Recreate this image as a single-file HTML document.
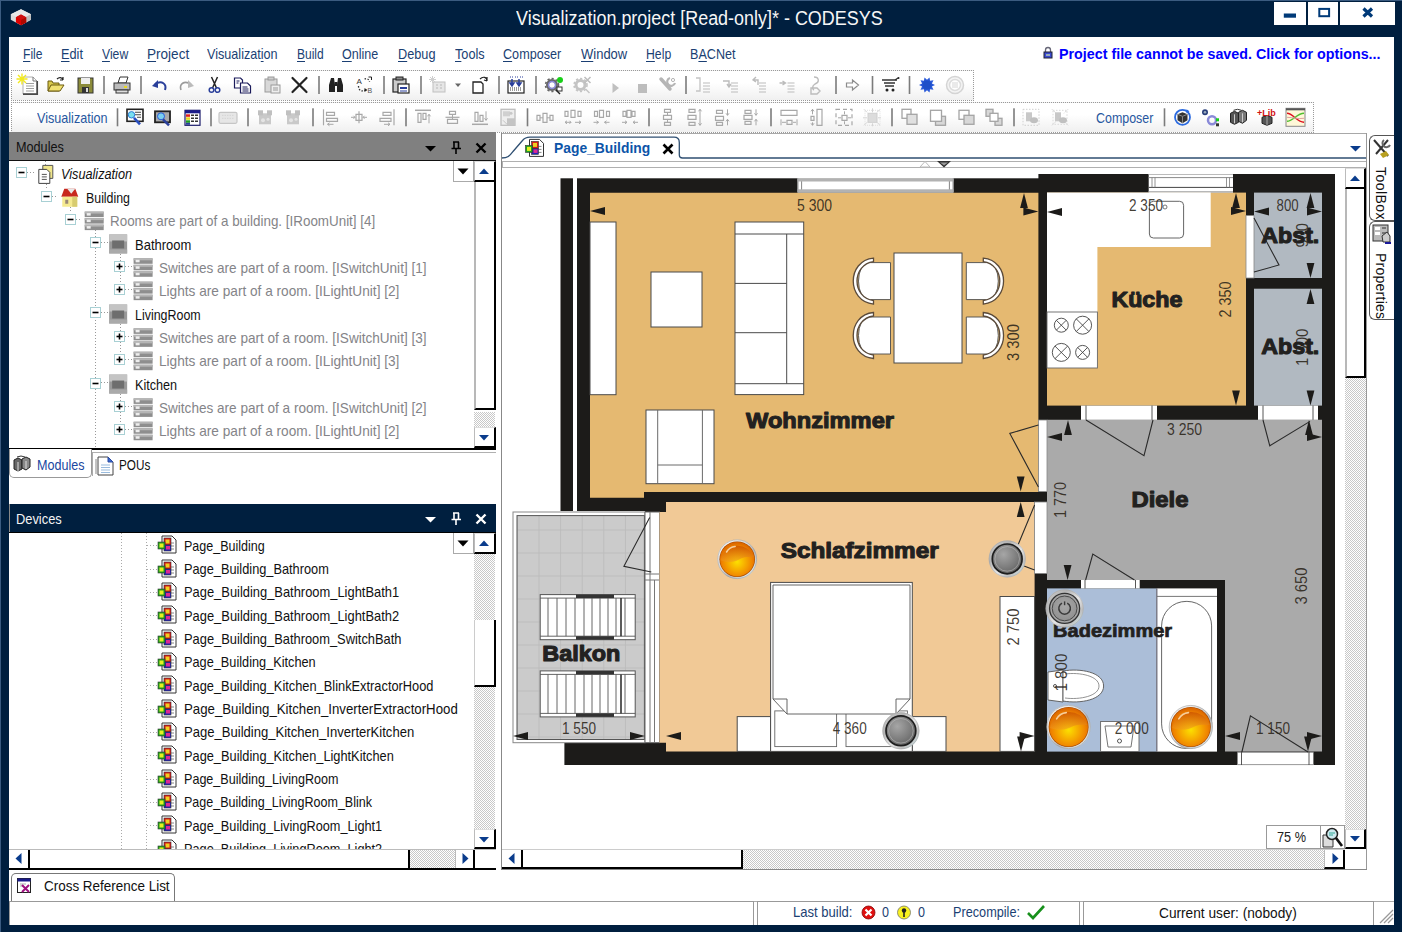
<!DOCTYPE html>
<html><head><meta charset="utf-8">
<style>
*{box-sizing:border-box;margin:0;padding:0}
html,body{width:1402px;height:932px;overflow:hidden;background:#001f3f;font-family:"Liberation Sans",sans-serif;font-size:13px;color:#000}
.abs{position:absolute}
#win{position:absolute;left:0;top:0;width:1402px;height:932px;background:#001f3f}
#client{position:absolute;left:9px;top:37px;width:1385px;height:888px;background:#fff}
#title{position:absolute;left:0;top:0;width:1402px;height:37px;color:#fff;font-size:18.5px;text-align:center;line-height:36px;letter-spacing:0px}
.wbtn{position:absolute;top:2px;height:23px;background:#fff}
.menu{position:absolute;top:46px;font-size:14px;color:#1b3f73;letter-spacing:-0.55px;white-space:nowrap}
.menu u{text-decoration:underline;text-underline-offset:2px}
.tb{position:absolute;border:1px dotted #9a9a9a;background:linear-gradient(#fff 40%,#f0f0f0)}
.sep{position:absolute;width:2px;background:#666}
.phdr{position:absolute;height:26px;color:#fff;font-size:13px;line-height:25px;padding-left:6px;letter-spacing:-0.2px}
.tree{position:absolute;font-size:14px;white-space:nowrap;letter-spacing:-0.35px}
.g{color:#7a7a7a}
.sbv{position:absolute;width:19px;background:#fff}
.hatch{background-image:conic-gradient(#fff 25%,#c8c8c8 0 50%,#fff 0 75%,#c8c8c8 0);background-size:2px 2px}
.sbtn{position:absolute;width:19px;height:19px;background:#fff;border:1px solid #555;border-right:2px solid #222;border-bottom:2px solid #222}
</style></head><body>
<div id="win">
<div class="abs" style="left:0;top:0;width:1402px;height:1px;background:#3b5b80"></div><div class="abs" style="left:0;top:0;width:1px;height:932px;background:#3b5b80"></div>
<div class="abs" style="left:515.7px;top:6.3px;font-size:20px;line-height:24px;color:#f6f6f6;white-space:nowrap;transform:scaleX(0.8970);transform-origin:0 50%;">Visualization.project [Read-only]* - CODESYS</div>
<div class="wbtn" style="left:1274px;width:32px"></div>
<div class="wbtn" style="left:1308px;width:30px"></div>
<div class="wbtn" style="left:1340px;width:55px"></div>
<svg class="abs" style="left:1270px;top:0" width="130" height="30"><rect x="13.8" y="13.5" width="12.2" height="4.2" fill="#003a78"/><rect x="49.3" y="8.9" width="9.8" height="7.3" fill="none" stroke="#003a78" stroke-width="2"/><path d="M93.5,8.5L102,16.5M102,8.5L93.5,16.5" stroke="#003a78" stroke-width="3.2"/></svg>
<svg class="abs" style="left:8px;top:6px" width="28" height="24" viewBox="8 6 28 24"><path d="M21,9.2L31,14.3V19.8L21,25.3L10.8,19.8V14.3Z" fill="#dcdcdc"/><path d="M21,9.2L31,14.3L21,19.5L10.8,14.3Z" fill="#e8e8e8"/><path d="M31,14.3V19.8L21,25.3V19.5Z" fill="#bdbdbd"/><path d="M21,14.6L26.2,17.3V22.5L21,25.3L15.9,22.5V17.3Z" fill="#e00000"/><path d="M21,19.8L26.2,17.3V22.5L21,25.3Z" fill="#b00800"/><path d="M21,14.6L26.2,17.3L21,19.8L15.9,17.3Z" fill="#d01010"/></svg>
<div id="client"></div>
<div class="abs" style="left:23.0px;top:45.2px;font-size:15px;line-height:18px;color:#1b3f73;white-space:nowrap;transform:scaleX(0.8067);transform-origin:0 50%;"><u style="text-underline-offset:2px">F</u>ile</div>
<div class="abs" style="left:61.2px;top:45.2px;font-size:15px;line-height:18px;color:#1b3f73;white-space:nowrap;transform:scaleX(0.8508);transform-origin:0 50%;"><u style="text-underline-offset:2px">E</u>dit</div>
<div class="abs" style="left:101.8px;top:45.2px;font-size:15px;line-height:18px;color:#1b3f73;white-space:nowrap;transform:scaleX(0.8124);transform-origin:0 50%;"><u style="text-underline-offset:2px">V</u>iew</div>
<div class="abs" style="left:146.8px;top:45.2px;font-size:15px;line-height:18px;color:#1b3f73;white-space:nowrap;transform:scaleX(0.9039);transform-origin:0 50%;"><u style="text-underline-offset:2px">P</u>roject</div>
<div class="abs" style="left:207.2px;top:45.2px;font-size:15px;line-height:18px;color:#1b3f73;white-space:nowrap;transform:scaleX(0.8409);transform-origin:0 50%;">Visualizat<u style="text-underline-offset:2px">i</u>on</div>
<div class="abs" style="left:296.6px;top:45.2px;font-size:15px;line-height:18px;color:#1b3f73;white-space:nowrap;transform:scaleX(0.8004);transform-origin:0 50%;"><u style="text-underline-offset:2px">B</u>uild</div>
<div class="abs" style="left:342.0px;top:45.2px;font-size:15px;line-height:18px;color:#1b3f73;white-space:nowrap;transform:scaleX(0.8349);transform-origin:0 50%;"><u style="text-underline-offset:2px">O</u>nline</div>
<div class="abs" style="left:397.5px;top:45.2px;font-size:15px;line-height:18px;color:#1b3f73;white-space:nowrap;transform:scaleX(0.8484);transform-origin:0 50%;"><u style="text-underline-offset:2px">D</u>ebug</div>
<div class="abs" style="left:454.5px;top:45.2px;font-size:15px;line-height:18px;color:#1b3f73;white-space:nowrap;transform:scaleX(0.8478);transform-origin:0 50%;"><u style="text-underline-offset:2px">T</u>ools</div>
<div class="abs" style="left:503.0px;top:45.2px;font-size:15px;line-height:18px;color:#1b3f73;white-space:nowrap;transform:scaleX(0.8410);transform-origin:0 50%;"><u style="text-underline-offset:2px">C</u>omposer</div>
<div class="abs" style="left:580.5px;top:45.2px;font-size:15px;line-height:18px;color:#1b3f73;white-space:nowrap;transform:scaleX(0.8658);transform-origin:0 50%;"><u style="text-underline-offset:2px">W</u>indow</div>
<div class="abs" style="left:645.5px;top:45.2px;font-size:15px;line-height:18px;color:#1b3f73;white-space:nowrap;transform:scaleX(0.8166);transform-origin:0 50%;"><u style="text-underline-offset:2px">H</u>elp</div>
<div class="abs" style="left:689.5px;top:45.2px;font-size:15px;line-height:18px;color:#1b3f73;white-space:nowrap;transform:scaleX(0.8397);transform-origin:0 50%;">B<u style="text-underline-offset:2px">A</u>CNet</div>
<div class="abs" style="left:1059.0px;top:45.2px;font-size:15px;line-height:18px;color:#0000ff;font-weight:700;white-space:nowrap;transform:scaleX(0.9524);transform-origin:0 50%;">Project file cannot be saved. Click for options...</div>
<svg class="abs" style="left:1042px;top:46px" width="12" height="14"><path d="M3.5,6V4A2.5,2.5 0 0 1 8.5,4V6" fill="none" stroke="#667" stroke-width="1.3"/><rect x="2" y="6" width="8" height="6" fill="#3a4ad0" stroke="#223"/><rect x="4" y="8" width="4" height="2" fill="#9ab"/></svg>
<div class="tb" style="left:11px;top:70px;width:963px;height:31px"></div>
<div class="tb" style="left:11px;top:102px;width:1303px;height:31px"></div>
<div class="abs" style="left:37.0px;top:109.0px;font-size:15px;line-height:18px;color:#2757a0;white-space:nowrap;transform:scaleX(0.8398);transform-origin:0 50%;">Visualization</div>
<div class="abs" style="left:1095.7px;top:109.0px;font-size:15px;line-height:18px;color:#2757a0;white-space:nowrap;transform:scaleX(0.8280);transform-origin:0 50%;">Composer</div>
<svg class="abs" style="left:0;top:0" width="1402" height="134" viewBox="0 0 1402 134">
<g transform="translate(29,85)"><path d="M-6,-8H4L8,-4V9H-6Z" fill="#fff" stroke="#b0b0b0"/><path d="M8.2,-4V9.2H-6" fill="none" stroke="#4a4a4a" stroke-width="1.7"/><path d="M4,-8V-4H8" fill="none" stroke="#777"/><path d="M-3,-1.5H5M-3,1H5M-3,3.5H5M-3,6H5" stroke="#a0a0a0" stroke-width="1.1"/><path d="M-11,-10L-3,-2M-3,-10L-11,-2M-7,-11.5V-0.5M-12.5,-6H-1.5" stroke="#f2ea20" stroke-width="1.4"/></g>
<g transform="translate(56,85)"><path d="M-8,6V-4H-4L-3,-2H3V6Z" fill="#d8c84a" stroke="#6a5a10" stroke-width="1"/><path d="M-8,6L-5,0H8L4,6Z" fill="#f0e070" stroke="#6a5a10" stroke-width="1"/><path d="M1,-6C3,-8 6,-8 7,-5M7,-5L7,-8M7,-5L4,-5" stroke="#222" fill="none" stroke-width="1.2"/></g>
<g transform="translate(85,85)"><rect x="-7" y="-7" width="15" height="15" fill="#8b8b3a" stroke="#333" stroke-width="1"/><rect x="-4" y="-7" width="9" height="6" fill="#eee"/><rect x="-3" y="2" width="7" height="6" fill="#333"/><rect x="1" y="3" width="2" height="4" fill="#ddd"/></g>
<rect x="103.2" y="76" width="1.6" height="18" fill="#7c7c7c"/>
<g transform="translate(122,85)"><path d="M-4,-2L-2,-8H6L4,-2Z" fill="#fff" stroke="#333"/><rect x="-8" y="-2" width="16" height="7" fill="#bbb" stroke="#333"/><rect x="-6" y="5" width="12" height="3" fill="#ddd" stroke="#333"/><rect x="2" y="1" width="3" height="2" fill="#e8d820"/></g>
<rect x="140.2" y="76" width="1.6" height="18" fill="#7c7c7c"/>
<g transform="translate(159,85)"><path d="M6,5C8,-1 3,-5 -4,-1" fill="none" stroke="#2a3f9a" stroke-width="2"/><path d="M-7,1L-1,-5L-1,3Z" fill="#2a3f9a"/></g>
<g transform="translate(187,85)"><path d="M-6,5C-8,-1 -3,-5 4,-1" fill="none" stroke="#9a9a9a" stroke-width="1.6"/><path d="M7,1L1,-5L1,3Z" fill="#bbb"/></g>
<g transform="translate(214.5,85)"><path d="M-3,-8L2,3M3,-8L-2,3" stroke="#222" stroke-width="1.5" fill="none"/><circle cx="-3" cy="5" r="2.3" fill="none" stroke="#2a3f9a" stroke-width="1.5"/><circle cx="3" cy="5" r="2.3" fill="none" stroke="#2a3f9a" stroke-width="1.5"/></g>
<g transform="translate(242.5,85)"><path d="M-8,-7H-2L0,-5V3H-8Z" fill="#fff" stroke="#1a1a5a" stroke-width="1.2"/><path d="M-2,-2H5L8,1V8H-2Z" fill="#fff" stroke="#1a1a5a" stroke-width="1.2"/><path d="M0,2H5M0,4H6M0,6H6M-6,-4H-3M-6,-2H-4" stroke="#1a1a5a" stroke-width="1"/></g>
<g transform="translate(272,85)"><rect x="-7" y="-6" width="12" height="13" fill="#d8d8d8" stroke="#9a9a9a"/><rect x="-4" y="-8" width="6" height="3" fill="#ccc" stroke="#9a9a9a"/><rect x="-1" y="0" width="9" height="8" fill="#eee" stroke="#9a9a9a"/><path d="M1,3H6M1,5H6" stroke="#9a9a9a"/></g>
<g transform="translate(299.5,85)"><path d="M-7,-7L7,7M7,-7L-7,7" stroke="#222" stroke-width="2.2" stroke-linecap="round"/></g>
<rect x="318.2" y="76" width="1.6" height="18" fill="#7c7c7c"/>
<g transform="translate(336,85)"><path d="M-7,7V0L-5,-7H-2L-1,0V7ZM7,7V0L5,-7H2L1,0V7Z" fill="#222"/><rect x="-1.5" y="-3" width="3" height="4" fill="#222"/></g>
<g transform="translate(364.5,85)"><text x="-8" y="-1" font-size="8" font-family="Liberation Sans" fill="#333">A</text><text x="3" y="8" font-size="7" font-family="Liberation Sans" fill="#555">B</text><path d="M-6,1C-6,6 -2,7 1,5" fill="none" stroke="#333" stroke-dasharray="1.5,1.5" stroke-width="1.3"/><path d="M0,-6C3,-7 5,-5 5,-3" fill="none" stroke="#333" stroke-dasharray="1.5,1.5" stroke-width="1.3"/><path d="M0,3L3,5L0,7Z" fill="#222"/><path d="M4,-8L7,-8L7,-5" fill="none" stroke="#222"/></g>
<rect x="383.2" y="76" width="1.6" height="18" fill="#7c7c7c"/>
<g transform="translate(401,85)"><rect x="-8" y="-6" width="13" height="13" fill="#ccc" stroke="#222" stroke-width="1.2"/><rect x="-5" y="-8" width="7" height="3" fill="#888" stroke="#222"/><rect x="-3" y="-1" width="11" height="9" fill="#fff" stroke="#222" stroke-width="1.2"/><rect x="-1" y="2" width="7" height="2" fill="#2a3f9a"/><path d="M-1,6H6" stroke="#2a3f9a"/></g>
<rect x="420.2" y="76" width="1.6" height="18" fill="#7c7c7c"/>
<g transform="translate(438,85)"><rect x="-5" y="-3" width="12" height="10" fill="#e6e6e6" stroke="#c0c0c0"/><path d="M-2,0H0M2,0H4M-2,3H0M2,3H4" stroke="#c8c8c8" stroke-width="1.5"/><path d="M-8,-8L-3,-3M-3,-8L-8,-3M-5.5,-9V-2M-9,-5.5H-2" stroke="#cfcfcf" stroke-width="1"/></g>
<g transform="translate(458,85)"><path d="M-3,-1.5H3L0,2Z" fill="#666"/></g>
<g transform="translate(480,85)"><path d="M-7,-3H1L3,-1V8H-7Z" fill="#fff" stroke="#222" stroke-width="1.3"/><path d="M0,-6C3,-9 7,-8 7,-4M7,-4L7,-8M7,-4L4,-5" stroke="#222" fill="none" stroke-width="1.2"/></g>
<rect x="498.2" y="76" width="1.6" height="18" fill="#7c7c7c"/>
<g transform="translate(516,85)"><rect x="-8" y="-4" width="16" height="12" fill="#fff" stroke="#222" stroke-width="1.2"/><path d="M-6,5H6M-6,3H6" stroke="#333" stroke-dasharray="1,1"/><path d="M-6,-8H-2M-1,-8H3M4,-8H8" stroke="#2a3f9a" stroke-dasharray="1,1"/><path d="M-4,-6V-1M-6,-2L-4,1L-2,-2ZM3,-6V-1M1,-2L3,1L5,-2Z" stroke="#2a3f9a" fill="#2a3f9a" stroke-width="1.5"/></g>
<rect x="535.2" y="76" width="1.6" height="18" fill="#7c7c7c"/>
<g transform="translate(554,85)"><circle cx="-2" cy="0" r="4.5" fill="none" stroke="#666" stroke-width="3"/><circle cx="-2" cy="0" r="6.5" fill="none" stroke="#666" stroke-width="1.6" stroke-dasharray="2.2,2"/><circle cx="-2" cy="0" r="3.5" fill="none" stroke="#8a8ad8" stroke-width="1.5"/><circle cx="6" cy="-5" r="3" fill="#18d018"/><rect x="3" y="2" width="5" height="4" fill="#fff" stroke="#333"/><path d="M2,5L6,9" stroke="#222" stroke-width="1.5"/></g>
<g transform="translate(582.5,85)"><circle cx="-2" cy="0" r="4.5" fill="none" stroke="#c4c4c4" stroke-width="3"/><circle cx="-2" cy="0" r="6.5" fill="none" stroke="#c4c4c4" stroke-width="1.6" stroke-dasharray="2.2,2"/><path d="M2,-8L8,-2M8,-8L2,-2" stroke="#bdbdbd" stroke-width="1.5"/><path d="M3,4L7,8" stroke="#c4c4c4" stroke-width="1.5"/></g>
<g transform="translate(615.5,85)"><path d="M-3,-2L3.5,3L-3,8Z" fill="#c0c0c0"/></g>
<g transform="translate(642.5,85)"><rect x="-4.5" y="-1" width="9" height="9" fill="#bdbdbd"/></g>
<g transform="translate(668,85)"><path d="M-7,-6L2,4" stroke="#b5b5b5" stroke-width="3.5" stroke-linecap="round"/><path d="M2,-7A4,4 0 1 0 7,-2" fill="none" stroke="#b5b5b5" stroke-width="2.2"/><circle cx="5" cy="-5" r="1.6" fill="#fff" stroke="#b5b5b5"/></g>
<rect x="685.2" y="76" width="1.6" height="18" fill="#7c7c7c"/>
<g transform="translate(703,85)"><path d="M-7,-7H-3V6H-7" fill="none" stroke="#c4c4c4" stroke-width="1.3"/><path d="M0,-2H7M0,1H7M0,4H7M0,7H7" stroke="#bcbcbc" stroke-width="1.2"/></g>
<g transform="translate(731,85)"><path d="M-8,-4H-2V1M-4,-1L-2,2L0,-1" fill="none" stroke="#bcbcbc" stroke-width="1.4"/><path d="M0,-2H7M0,1H7M0,4H7M0,7H7" stroke="#bcbcbc" stroke-width="1.2"/></g>
<g transform="translate(759,85)"><path d="M-3,-8L-6,-5L-3,-3M-6,-5H-1V0" fill="none" stroke="#bcbcbc" stroke-width="1.4"/><path d="M0,-2H7M0,1H7M0,4H7M0,7H7" stroke="#bcbcbc" stroke-width="1.2"/></g>
<g transform="translate(787.5,85)"><path d="M-8,-2H-3M-5,-4L-2,-2L-5,0" fill="none" stroke="#bcbcbc" stroke-width="1.4"/><path d="M0,-2H7M0,1H7M0,4H7M0,7H7" stroke="#bcbcbc" stroke-width="1.2"/></g>
<g transform="translate(815,85)"><path d="M-1,-8C4,-8 5,-3 0,-1C-3,1 -3,4 -1,5M-4,3H2L5,6L2,9H-4Z" fill="none" stroke="#bcbcbc" stroke-width="1.4"/></g>
<rect x="835.2" y="76" width="1.6" height="18" fill="#7c7c7c"/>
<g transform="translate(852.5,85)"><path d="M-6,-2H0V-5L6,0L0,5V2H-6Z" fill="#fff" stroke="#8c8c8c" stroke-width="1.2"/></g>
<rect x="871.7" y="76" width="1.6" height="18" fill="#7c7c7c"/>
<g transform="translate(890,85)"><path d="M-8,-5H7M-6,-2H5M-5,1H4" stroke="#333" stroke-width="1.6"/><path d="M5,-5L8,-7" stroke="#333" stroke-width="1.4"/><circle cx="-3" cy="5" r="1.5" fill="#222"/><circle cx="3" cy="5" r="1.5" fill="#222"/><circle cx="8.5" cy="-7" r="1" fill="#222"/></g>
<rect x="908.7" y="76" width="1.6" height="18" fill="#7c7c7c"/>
<g transform="translate(927,85)"><polygon points="8.0,0.0 4.9,1.6 6.5,4.7 3.1,4.2 2.5,7.6 0.0,5.2 -2.5,7.6 -3.1,4.2 -6.5,4.7 -4.9,1.6 -8.0,0.0 -4.9,-1.6 -6.5,-4.7 -3.1,-4.2 -2.5,-7.6 -0.0,-5.2 2.5,-7.6 3.1,-4.2 6.5,-4.7 4.9,-1.6" fill="#2a5ad8"/><circle r="4.5" fill="#1e4fc8"/></g>
<g transform="translate(955,85)"><circle r="8.5" fill="#f4f4f4" stroke="#d4d4d4" stroke-width="1.5"/><circle r="5.5" fill="#fff" stroke="#dcdcdc" stroke-width="1.5"/><rect x="-3" y="-3" width="6" height="6" fill="#eaeaea"/></g>
<rect x="116.7" y="108.3" width="1.6" height="18" fill="#7c7c7c"/>
<g transform="translate(135,117.3)"><rect x="-8" y="-8" width="16" height="12" fill="#fff" stroke="#222" stroke-width="1.6"/><path d="M0,-5H6M0,-2.5H6M2,0H6" stroke="#444" stroke-width="1.1"/><circle cx="-3.5" cy="-2.5" r="3.2" fill="#7ae0f0" stroke="#2a7ad8"/><path d="M-1,0.5L5,7" stroke="#2a4fc0" stroke-width="2.6"/></g>
<g transform="translate(163,117.3)"><rect x="-8" y="-6" width="15" height="11" fill="#aaa" stroke="#222" stroke-width="1.8"/><circle cx="-2" cy="-1" r="3.5" fill="#7ad0f0" stroke="#2a5ad8"/><path d="M0,2L6,8" stroke="#2a3f9a" stroke-width="2.5"/></g>
<g transform="translate(192,117.3)"><rect x="-7" y="-7" width="15" height="15" fill="#fff" stroke="#1a1a6a" stroke-width="1.2"/><rect x="-7" y="-7" width="15" height="3" fill="#1a1a8a"/><rect x="-6" y="-3" width="4" height="2.5" fill="#e02020"/><rect x="-6" y="0" width="4" height="2.5" fill="#e8d820"/><rect x="-6" y="3" width="4" height="2.5" fill="#20a020"/><rect x="-6" y="5.5" width="4" height="2" fill="#2a3f9a"/><path d="M-1,-2H2M3,-2H6M-1,1H2M3,1H6M-1,4H2M3,4H6" stroke="#333" stroke-width="1.6"/></g>
<rect x="210.2" y="108.3" width="1.6" height="18" fill="#7c7c7c"/>
<g transform="translate(228,117.3)"><rect x="-9" y="-5" width="18" height="11" rx="1.5" fill="#e6e6e6" stroke="#c6c6c6" stroke-width="1.2"/><path d="M-6,-2H6M-6,1H6" stroke="#d4d4d4" stroke-dasharray="1.5,1"/></g>
<rect x="247.2" y="108.3" width="1.6" height="18" fill="#7c7c7c"/>
<g transform="translate(265,117.3)"><rect x="-6" y="-4" width="12" height="11" fill="#c9c9c9"/><rect x="-7" y="-7" width="5" height="5" fill="#c0c0c0"/><rect x="2" y="-7" width="5" height="5" fill="#c0c0c0"/><circle cx="-2" cy="3" r="2" fill="#e4e4e4"/><circle cx="3" cy="2" r="1.5" fill="#e4e4e4"/></g>
<g transform="translate(293,117.3)"><rect x="-6" y="-4" width="12" height="11" fill="#c9c9c9"/><rect x="-7" y="-7" width="5" height="5" fill="#c0c0c0"/><rect x="2" y="-7" width="5" height="5" fill="#c0c0c0"/><circle cx="-2" cy="3" r="2" fill="#e4e4e4"/><circle cx="3" cy="2" r="1.5" fill="#e4e4e4"/></g>
<rect x="312.2" y="108.3" width="1.6" height="18" fill="#7c7c7c"/>
<g transform="translate(330.5,117.3)"><path d="M-7,-8V8" fill="none" stroke="#a8a8a8" stroke-width="1.2"/><path d="M-4,-5H4V-2H-4ZM-4,1H7V4H-4Z" fill="none" stroke="#a8a8a8" stroke-width="1.2"/><path d="M-3,7H3M-3,7L-1,5.5M-3,7L-1,8.5" fill="none" stroke="#a8a8a8" stroke-width="1"/></g>
<g transform="translate(359,117.3)"><path d="M0,-6V6" fill="none" stroke="#a8a8a8" stroke-width="1.2"/><path d="M-3,-3H3V3H-3Z" fill="none" stroke="#a8a8a8" stroke-width="1.2"/><path d="M-8,0H-4M4,0H8M-5.5,-1.5L-4,0L-5.5,1.5M5.5,-1.5L4,0L5.5,1.5" fill="none" stroke="#a8a8a8" stroke-width="1"/></g>
<g transform="translate(387,117.3)"><path d="M7,-8V8" fill="none" stroke="#a8a8a8" stroke-width="1.2"/><path d="M4,-5H-4V-2H4ZM4,1H-7V4H4Z" fill="none" stroke="#a8a8a8" stroke-width="1.2"/><path d="M-3,7H3M3,7L1,5.5M3,7L1,8.5" fill="none" stroke="#a8a8a8" stroke-width="1"/></g>
<rect x="405.2" y="108.3" width="1.6" height="18" fill="#7c7c7c"/>
<g transform="translate(423,117.3)"><path d="M-8,-7H8" fill="none" stroke="#a8a8a8" stroke-width="1.5"/><path d="M-5,-4H-2V5H-5ZM0,-4H3V2H0Z" fill="none" stroke="#a8a8a8" stroke-width="1.2"/><path d="M6,6V-3M6,-3L4.5,-1M6,-3L7.5,-1" fill="none" stroke="#a8a8a8" stroke-width="1"/></g>
<g transform="translate(452.5,117.3)"><path d="M-7,0H7" fill="none" stroke="#a8a8a8" stroke-width="1.2"/><path d="M-3,-6H3V-3H-3ZM-5,2H5V6H-5Z" fill="none" stroke="#a8a8a8" stroke-width="1.2"/><path d="M0,-3V2" fill="none" stroke="#a8a8a8" stroke-width="1"/></g>
<g transform="translate(480,117.3)"><path d="M-8,7H8" fill="none" stroke="#a8a8a8" stroke-width="1.5"/><path d="M-5,4H-2V-5H-5ZM0,4H3V-2H0Z" fill="none" stroke="#a8a8a8" stroke-width="1.2"/><path d="M6,-6V3M6,3L4.5,1M6,3L7.5,1" fill="none" stroke="#a8a8a8" stroke-width="1"/></g>
<g transform="translate(508,117.3)"><rect x="-7" y="-8" width="14" height="16" fill="#eee" stroke="#bdbdbd" stroke-width="1.3"/><rect x="-5" y="-6" width="7" height="5" fill="#d0d0d0"/><circle cx="3" cy="-4" r="1.5" fill="#c8c8c8"/><rect x="-1" y="1" width="8" height="7" fill="#c4c4c4"/><path d="M-5,3L-1,7" stroke="#c4c4c4"/></g>
<rect x="526.7" y="108.3" width="1.6" height="18" fill="#7c7c7c"/>
<g transform="translate(545,117.3)"><path d="M-8,-2H-5V3H-8ZM-2,-4H2V5H-2ZM5,-2H8V3H5Z" fill="none" stroke="#a8a8a8" stroke-width="1.2"/><path d="M-5,0.5H-2M2,0.5H5" fill="none" stroke="#a8a8a8" stroke-width="1"/></g>
<g transform="translate(573,117.3)"><path d="M-8,-6H-5V-1H-8ZM-2,-7H2V0H-2ZM5,-6H8V-1H5Z" fill="none" stroke="#a8a8a8" stroke-width="1.2"/><path d="M-8,5H-2M2,5H8M-6,3.5L-8,5L-6,6.5M6,3.5L8,5L6,6.5M-3.5,3.5L-2,5L-3.5,6.5" fill="none" stroke="#a8a8a8" stroke-width="1"/></g>
<g transform="translate(601.5,117.3)"><path d="M-7,-6H-4V-1H-7ZM-2,-7H2V0H-2ZM5,-6H8V-1H5Z" fill="none" stroke="#a8a8a8" stroke-width="1.2"/><path d="M-8,5H-3M3,5H8M-5,3.5L-3,5L-5,6.5M5,3.5L3,5L5,6.5" fill="none" stroke="#a8a8a8" stroke-width="1"/></g>
<g transform="translate(630,117.3)"><path d="M-7,-6H-4V-1H-7ZM-3,-7H1V0H-3ZM2,-6H5V-1H2Z" fill="none" stroke="#a8a8a8" stroke-width="1.2"/><path d="M-8,5H-3M3,5H8M-5,3.5L-3,5L-5,6.5M5,3.5L3,5L5,6.5" fill="none" stroke="#a8a8a8" stroke-width="1"/></g>
<rect x="648.2" y="108.3" width="1.6" height="18" fill="#7c7c7c"/>
<g transform="translate(667.5,117.3)"><path d="M-3,-8H3V-5H-3ZM-4,-2H4V2H-4ZM-3,5H3V8H-3Z" fill="none" stroke="#a8a8a8" stroke-width="1.2"/><path d="M0,-5V-2M0,2V5" fill="none" stroke="#a8a8a8" stroke-width="1"/></g>
<g transform="translate(695,117.3)"><path d="M-6,-8H0V-5H-6ZM-7,-2H1V2H-7ZM-6,5H0V8H-6Z" fill="none" stroke="#a8a8a8" stroke-width="1.2"/><path d="M5,-8V8M3.5,-6L5,-8L6.5,-6M3.5,6L5,8L6.5,6" fill="none" stroke="#a8a8a8" stroke-width="1"/></g>
<g transform="translate(722.5,117.3)"><path d="M-6,-7H0V-4H-6ZM-7,-1H1V3H-7ZM-6,5H0V8H-6Z" fill="none" stroke="#a8a8a8" stroke-width="1.2"/><path d="M5,-8V-2M5,2V8M3.5,-4L5,-2L6.5,-4M3.5,4L5,2L6.5,4" fill="none" stroke="#a8a8a8" stroke-width="1"/></g>
<g transform="translate(751,117.3)"><path d="M-6,-7H0V-4H-6ZM-7,-2H1V2H-7Z M-6,4H0V7H-6Z" fill="none" stroke="#a8a8a8" stroke-width="1.2"/><path d="M5,-8V-2M5,2V8M3.5,-4L5,-2L6.5,-4M3.5,4L5,2L6.5,4" fill="none" stroke="#a8a8a8" stroke-width="1"/></g>
<rect x="770.2" y="108.3" width="1.6" height="18" fill="#7c7c7c"/>
<g transform="translate(789,117.3)"><path d="M-8,-7H8V-2H-8Z" fill="none" stroke="#a8a8a8" stroke-width="1.2"/><path d="M-8,2V8M8,2V8" fill="none" stroke="#a8a8a8" stroke-width="1"/><path d="M-2,3H3V7H-2Z" fill="none" stroke="#a8a8a8" stroke-width="1.2"/><path d="M-7,5H-3M4,5H7" fill="none" stroke="#a8a8a8" stroke-width="1"/></g>
<g transform="translate(816,117.3)"><path d="M1,-8H6V8H1Z" fill="none" stroke="#a8a8a8" stroke-width="1.2"/><path d="M-5,-1H-2V3H-5Z" fill="none" stroke="#a8a8a8" stroke-width="1.2"/><path d="M-3.5,-8V-3M-3.5,5V8M-5,-6L-3.5,-8L-2,-6M-5,6L-3.5,8L-2,6" fill="none" stroke="#a8a8a8" stroke-width="1"/></g>
<g transform="translate(844,117.3)"><path d="M-8,-8H8V8H-8Z" fill="none" stroke="#a8a8a8" stroke-width="1.2" stroke-dasharray="4,3"/><path d="M-2,-2H3V3H-2Z" fill="none" stroke="#a8a8a8" stroke-width="1.2"/><path d="M0.5,-6V-3M0.5,4V7M-6,0.5H-3M4,0.5H7" fill="none" stroke="#a8a8a8" stroke-width="1"/></g>
<g transform="translate(872,117.3)"><rect x="-4" y="-4" width="9" height="9" fill="#dcdcdc" stroke="#cfcfcf"/><path d="M-8,-8L-5,-5M8,-8L5,-5M-8,8L-5,5M8,8L5,5M0.5,-9V-5M0.5,6V9M-9,0.5H-5M6,0.5H9" stroke="#d4d4d4"/><rect x="-7" y="-7" width="15" height="15" fill="none" stroke="#e0e0e0" stroke-dasharray="1,1"/></g>
<rect x="891.2" y="108.3" width="1.6" height="18" fill="#7c7c7c"/>
<g transform="translate(909,117.3)"><rect x="-7" y="-8" width="9" height="9" fill="#fff" stroke="#a4a4a4" stroke-width="1.3"/><rect x="-2" y="-3" width="10" height="10" fill="#e0e0e0" stroke="#a4a4a4" stroke-width="1.3"/></g>
<g transform="translate(937.5,117.3)"><rect x="-2" y="-1" width="10" height="9" fill="#d8d8d8" stroke="#a4a4a4" stroke-width="1.3"/><rect x="-7" y="-7" width="11" height="11" fill="#fff" stroke="#a4a4a4" stroke-width="1.3"/></g>
<g transform="translate(966,117.3)"><rect x="-7" y="-7" width="10" height="9" fill="#fff" stroke="#a4a4a4" stroke-width="1.3"/><rect x="-2" y="-2" width="10" height="9" fill="#d8d8d8" stroke="#a4a4a4" stroke-width="1.3"/></g>
<g transform="translate(994,117.3)"><rect x="-8" y="-8" width="7" height="7" fill="#d8d8d8" stroke="#a4a4a4" stroke-width="1.3"/><rect x="1" y="1" width="7" height="7" fill="#d8d8d8" stroke="#a4a4a4" stroke-width="1.3"/><rect x="-4" y="-4" width="8" height="8" fill="#fff" stroke="#a4a4a4" stroke-width="1.3"/></g>
<rect x="1013.2" y="108.3" width="1.6" height="18" fill="#7c7c7c"/>
<g transform="translate(1031,117.3)"><rect x="-8" y="-8" width="16" height="16" fill="none" stroke="#d0d0d0" stroke-dasharray="1.5,1.5"/><rect x="-5" y="-5" width="6" height="9" fill="#c8c8c8"/><ellipse cx="3" cy="3" rx="4" ry="3" fill="#c0c0c0"/></g>
<g transform="translate(1060,117.3)"><path d="M-8,-8L-4,-4M8,-8L4,-4M-8,8L-4,4M8,8L4,4" stroke="#d0d0d0" stroke-dasharray="1.5,1"/><rect x="-7" y="-7" width="14" height="14" fill="none" stroke="#dadada" stroke-dasharray="1.5,1.5"/><rect x="-5" y="-5" width="6" height="9" fill="#c8c8c8"/><ellipse cx="3" cy="3" rx="4" ry="3" fill="#c0c0c0"/></g>
<rect x="1163.7" y="108.3" width="1.6" height="18" fill="#7c7c7c"/>
<g transform="translate(1182.5,117.3)"><circle r="7.5" fill="none" stroke="#2a6ae0" stroke-width="1.8"/><path d="M-5,-3L0,-5L5,-3V3L0,6L-5,3Z" fill="#333"/><path d="M-5,-3L0,-1L5,-3M0,-1V6" stroke="#888" fill="none"/><path d="M4,-8L7,-6L4,-4Z" fill="#2a6ae0"/></g>
<g transform="translate(1210,117.3)"><circle cx="-5" cy="-5" r="3" fill="#2a3f7a"/><circle cx="-5" cy="-5" r="1.3" fill="#9ab"/><circle cx="2" cy="3" r="4" fill="none" stroke="#8a8ad8" stroke-width="2.5"/><rect x="6" y="1" width="3" height="3" fill="#18d018"/><rect x="6" y="6" width="3" height="3" fill="#333"/></g>
<g transform="translate(1238.5,117.3)"><path d="M-8,-4L-4,-6L0,-4V5L-4,7L-8,5Z" fill="#555" stroke="#222"/><path d="M0,-5L4,-7L8,-5V3L4,6L0,4Z" fill="#777" stroke="#222"/><path d="M-5,-7L-1,-8L3,-7" stroke="#333" fill="none"/><path d="M-4,-3V6M4,-4V5" stroke="#ccc"/></g>
<g transform="translate(1266,117.3)"><path d="M-4,0L1,-2L6,0V6L1,8L-4,6Z" fill="#555" stroke="#222"/><path d="M1,-2V8" stroke="#aaa"/><text x="-9" y="-1" font-size="9" font-weight="bold" font-family="Liberation Sans" fill="#d01010">+Lib</text></g>
<g transform="translate(1295,117.3)"><rect x="-9" y="-9" width="19" height="18" fill="#fff8d8" stroke="#888"/><rect x="-9" y="-9" width="19" height="2" fill="#555"/><path d="M-8,-4C-2,-4 2,5 9,5" stroke="#e01020" fill="none" stroke-width="1.4"/><path d="M-8,4C-2,4 2,-4 9,-4" stroke="#50c030" fill="none" stroke-width="1.4"/><path d="M-8,0C-2,0 2,2 9,1" stroke="#e0a0a0" fill="none" stroke-width="1"/></g>
</svg>
<div class="abs" style="left:9px;top:132px;width:487px;height:29px;background:#808080;border-bottom:1px solid #111"></div>
<div class="abs" style="left:15.5px;top:138.9px;font-size:14px;line-height:17px;color:#111;white-space:nowrap;transform:scaleX(0.9032);transform-origin:0 50%;">Modules</div>
<svg class="abs" style="left:420px;top:140px" width="76" height="16" viewBox="0 0 76 16"><path d="M5,6H16L10.5,11.5Z" fill="#000"/><path d="M33,2H39M34,2V8M38.5,2V8M31.5,8.5H41M36,9V14" stroke="#000" stroke-width="1.6" fill="none"/><path d="M56.5,3.5L65.5,12.5M65.5,3.5L56.5,12.5" stroke="#000" stroke-width="2.4"/></svg>
<div class="abs" style="left:9px;top:448px;width:487px;height:2px;background:#000"></div>
<div class="abs" style="left:453px;top:161px;width:21px;height:21px;background:#fff;border:1px solid #aaa;border-top:none"></div><svg class="abs" style="left:457px;top:168px" width="12" height="7"><path d="M0.5,0.5H11.5L6,6.5Z" fill="#000"/></svg>
<div class="abs" style="left:474px;top:161px;width:22px;height:21px;background:#fff;border-left:1px solid #bbb;border-top:1px solid #ddd;border-right:2px solid #000;border-bottom:2px solid #000"></div><svg class="abs" style="left:479px;top:168px" width="10" height="6"><path d="M0,6H10L5,0.5Z" fill="#0a3c8c"/></svg>
<div class="abs" style="left:474px;top:182px;width:22px;height:228px;background:#fff;border-left:2px solid #b8b8b8;border-right:2px solid #000;border-bottom:2px solid #000"></div>
<div class="abs hatch" style="left:474px;top:412px;width:21px;height:16px"></div>
<div class="abs" style="left:474px;top:427px;width:22px;height:21px;background:#fff;border-left:1px solid #bbb;border-top:1px solid #ddd;border-right:2px solid #000;border-bottom:2px solid #000"></div><svg class="abs" style="left:479px;top:435px" width="10" height="6"><path d="M0,0H10L5,5.5Z" fill="#0a3c8c"/></svg>
<div class="abs" style="left:61.2px;top:165.4px;font-size:15px;line-height:18px;color:#111;font-style:italic;white-space:nowrap;transform:scaleX(0.8457);transform-origin:0 50%;">Visualization</div>
<div class="abs" style="left:85.6px;top:188.8px;font-size:15px;line-height:18px;color:#111;white-space:nowrap;transform:scaleX(0.8244);transform-origin:0 50%;">Building</div>
<div class="abs" style="left:109.7px;top:212.1px;font-size:15px;line-height:18px;color:#848488;white-space:nowrap;transform:scaleX(0.8935);transform-origin:0 50%;">Rooms are part of a building. [IRoomUnit] [4]</div>
<div class="abs" style="left:134.5px;top:235.5px;font-size:15px;line-height:18px;color:#111;white-space:nowrap;transform:scaleX(0.8655);transform-origin:0 50%;">Bathroom</div>
<div class="abs" style="left:158.9px;top:258.8px;font-size:15px;line-height:18px;color:#848488;white-space:nowrap;transform:scaleX(0.9039);transform-origin:0 50%;">Switches are part of a room. [ISwitchUnit] [1]</div>
<div class="abs" style="left:158.9px;top:282.1px;font-size:15px;line-height:18px;color:#848488;white-space:nowrap;transform:scaleX(0.9095);transform-origin:0 50%;">Lights are part of a room. [ILightUnit] [2]</div>
<div class="abs" style="left:134.5px;top:305.5px;font-size:15px;line-height:18px;color:#111;white-space:nowrap;transform:scaleX(0.8293);transform-origin:0 50%;">LivingRoom</div>
<div class="abs" style="left:158.9px;top:328.9px;font-size:15px;line-height:18px;color:#848488;white-space:nowrap;transform:scaleX(0.9039);transform-origin:0 50%;">Switches are part of a room. [ISwitchUnit] [3]</div>
<div class="abs" style="left:158.9px;top:352.2px;font-size:15px;line-height:18px;color:#848488;white-space:nowrap;transform:scaleX(0.9095);transform-origin:0 50%;">Lights are part of a room. [ILightUnit] [3]</div>
<div class="abs" style="left:134.5px;top:375.6px;font-size:15px;line-height:18px;color:#111;white-space:nowrap;transform:scaleX(0.8412);transform-origin:0 50%;">Kitchen</div>
<div class="abs" style="left:158.9px;top:398.9px;font-size:15px;line-height:18px;color:#848488;white-space:nowrap;transform:scaleX(0.9039);transform-origin:0 50%;">Switches are part of a room. [ISwitchUnit] [2]</div>
<div class="abs" style="left:158.9px;top:422.2px;font-size:15px;line-height:18px;color:#848488;white-space:nowrap;transform:scaleX(0.9095);transform-origin:0 50%;">Lights are part of a room. [ILightUnit] [2]</div>
<svg class="abs" style="left:0;top:161px" width="453" height="287" viewBox="0 161 453 287">
<g stroke="#999" stroke-width="1" stroke-dasharray="1,2" fill="none"><path d="M27,172.5H36M45.5,161V165M52,196.5H58M46.5,184V190M76,219.5H82M70.5,207V213M95.5,230V448M101,242.5H108M101,312.5H108M101,382.5H108M120.5,254V290M120.5,324V360M120.5,394V430M125,266.5H132M125,289.5H132M125,336.5H132M125,359.5H132M125,406.5H132M125,429.5H132"/></g>
<rect x="16.5" y="167.5" width="10" height="10" fill="#fff" stroke="#a8d0d4" stroke-width="1"/><path d="M18.5,172.5H24.5" stroke="#000" stroke-width="1.6"/><path d="M42.8,165.4H52.8V178.4H42.8Z" fill="#f0e68c" stroke="#555"/><path d="M38.8,169.4H46.8L49.8,172.4V183.4H38.8Z" fill="#fff" stroke="#444"/><path d="M41.8,174.4H46.8M41.8,176.9H46.8M41.8,179.4H46.8" stroke="#555"/>
<rect x="41.5" y="191.5" width="10" height="10" fill="#fff" stroke="#a8d0d4" stroke-width="1"/><path d="M43.5,196.5H49.5" stroke="#000" stroke-width="1.6"/><path d="M61.25,196.75L64.25,188.75H75.25L78.25,196.75Z" fill="#c8281e"/><path d="M67.25,188.75L71.25,193.75L75.25,188.75" fill="#e8e8e8"/><rect x="62.25" y="196.75" width="15" height="10" fill="#f5ea90"/><rect x="72.25" y="196.75" width="5" height="10" fill="#d8cc70"/><rect x="65.25" y="199.75" width="3" height="4" fill="#987"/>
<rect x="65.5" y="214.5" width="10" height="10" fill="#fff" stroke="#a8d0d4" stroke-width="1"/><path d="M67.5,219.5H73.5" stroke="#000" stroke-width="1.6"/><rect x="84.69999999999999" y="211.60000000000002" width="19" height="5.5" fill="#8e8e8e"/><rect x="84.69999999999999" y="211.60000000000002" width="19" height="2" fill="#b5b5b5"/><rect x="86.69999999999999" y="213.10000000000002" width="4" height="2.5" fill="#eee"/><rect x="84.69999999999999" y="218.10000000000002" width="19" height="5.5" fill="#8e8e8e"/><rect x="84.69999999999999" y="218.10000000000002" width="19" height="2" fill="#b5b5b5"/><rect x="86.69999999999999" y="219.60000000000002" width="4" height="2.5" fill="#eee"/><rect x="84.69999999999999" y="224.60000000000002" width="19" height="5.5" fill="#8e8e8e"/><rect x="84.69999999999999" y="224.60000000000002" width="19" height="2" fill="#b5b5b5"/><rect x="86.69999999999999" y="226.10000000000002" width="4" height="2.5" fill="#eee"/>
<rect x="90.5" y="237.5" width="10" height="10" fill="#fff" stroke="#a8d0d4" stroke-width="1"/><path d="M92.5,242.5H98.5" stroke="#000" stroke-width="1.6"/><rect x="109.14999999999999" y="234.45000000000002" width="18" height="19" fill="#999"/><rect x="109.14999999999999" y="234.45000000000002" width="18" height="7" fill="#c4c4c4"/><rect x="112.14999999999999" y="240.45000000000002" width="12" height="8" fill="#6e6e6e"/><rect x="109.14999999999999" y="249.45000000000002" width="18" height="4" fill="#aaa"/>
<rect x="114.5" y="261.5" width="10" height="10" fill="#fff" stroke="#a8d0d4" stroke-width="1"/><path d="M116.5,266.5H122.5" stroke="#000" stroke-width="1.6"/><path d="M119.5,263.5V269.5" stroke="#000" stroke-width="1.6"/><rect x="133.6" y="258.3" width="19" height="5.5" fill="#8e8e8e"/><rect x="133.6" y="258.3" width="19" height="2" fill="#b5b5b5"/><rect x="135.6" y="259.8" width="4" height="2.5" fill="#eee"/><rect x="133.6" y="264.8" width="19" height="5.5" fill="#8e8e8e"/><rect x="133.6" y="264.8" width="19" height="2" fill="#b5b5b5"/><rect x="135.6" y="266.3" width="4" height="2.5" fill="#eee"/><rect x="133.6" y="271.3" width="19" height="5.5" fill="#8e8e8e"/><rect x="133.6" y="271.3" width="19" height="2" fill="#b5b5b5"/><rect x="135.6" y="272.8" width="4" height="2.5" fill="#eee"/>
<rect x="114.5" y="284.5" width="10" height="10" fill="#fff" stroke="#a8d0d4" stroke-width="1"/><path d="M116.5,289.5H122.5" stroke="#000" stroke-width="1.6"/><path d="M119.5,286.5V292.5" stroke="#000" stroke-width="1.6"/><rect x="133.6" y="281.65" width="19" height="5.5" fill="#8e8e8e"/><rect x="133.6" y="281.65" width="19" height="2" fill="#b5b5b5"/><rect x="135.6" y="283.15" width="4" height="2.5" fill="#eee"/><rect x="133.6" y="288.15" width="19" height="5.5" fill="#8e8e8e"/><rect x="133.6" y="288.15" width="19" height="2" fill="#b5b5b5"/><rect x="135.6" y="289.65" width="4" height="2.5" fill="#eee"/><rect x="133.6" y="294.65" width="19" height="5.5" fill="#8e8e8e"/><rect x="133.6" y="294.65" width="19" height="2" fill="#b5b5b5"/><rect x="135.6" y="296.15" width="4" height="2.5" fill="#eee"/>
<rect x="90.5" y="307.5" width="10" height="10" fill="#fff" stroke="#a8d0d4" stroke-width="1"/><path d="M92.5,312.5H98.5" stroke="#000" stroke-width="1.6"/><rect x="109.14999999999999" y="304.5" width="18" height="19" fill="#999"/><rect x="109.14999999999999" y="304.5" width="18" height="7" fill="#c4c4c4"/><rect x="112.14999999999999" y="310.5" width="12" height="8" fill="#6e6e6e"/><rect x="109.14999999999999" y="319.5" width="18" height="4" fill="#aaa"/>
<rect x="114.5" y="331.5" width="10" height="10" fill="#fff" stroke="#a8d0d4" stroke-width="1"/><path d="M116.5,336.5H122.5" stroke="#000" stroke-width="1.6"/><path d="M119.5,333.5V339.5" stroke="#000" stroke-width="1.6"/><rect x="133.6" y="328.35" width="19" height="5.5" fill="#8e8e8e"/><rect x="133.6" y="328.35" width="19" height="2" fill="#b5b5b5"/><rect x="135.6" y="329.85" width="4" height="2.5" fill="#eee"/><rect x="133.6" y="334.85" width="19" height="5.5" fill="#8e8e8e"/><rect x="133.6" y="334.85" width="19" height="2" fill="#b5b5b5"/><rect x="135.6" y="336.35" width="4" height="2.5" fill="#eee"/><rect x="133.6" y="341.35" width="19" height="5.5" fill="#8e8e8e"/><rect x="133.6" y="341.35" width="19" height="2" fill="#b5b5b5"/><rect x="135.6" y="342.85" width="4" height="2.5" fill="#eee"/>
<rect x="114.5" y="354.5" width="10" height="10" fill="#fff" stroke="#a8d0d4" stroke-width="1"/><path d="M116.5,359.5H122.5" stroke="#000" stroke-width="1.6"/><path d="M119.5,356.5V362.5" stroke="#000" stroke-width="1.6"/><rect x="133.6" y="351.70000000000005" width="19" height="5.5" fill="#8e8e8e"/><rect x="133.6" y="351.70000000000005" width="19" height="2" fill="#b5b5b5"/><rect x="135.6" y="353.20000000000005" width="4" height="2.5" fill="#eee"/><rect x="133.6" y="358.20000000000005" width="19" height="5.5" fill="#8e8e8e"/><rect x="133.6" y="358.20000000000005" width="19" height="2" fill="#b5b5b5"/><rect x="135.6" y="359.70000000000005" width="4" height="2.5" fill="#eee"/><rect x="133.6" y="364.70000000000005" width="19" height="5.5" fill="#8e8e8e"/><rect x="133.6" y="364.70000000000005" width="19" height="2" fill="#b5b5b5"/><rect x="135.6" y="366.20000000000005" width="4" height="2.5" fill="#eee"/>
<rect x="90.5" y="378.5" width="10" height="10" fill="#fff" stroke="#a8d0d4" stroke-width="1"/><path d="M92.5,383.5H98.5" stroke="#000" stroke-width="1.6"/><rect x="109.14999999999999" y="374.55" width="18" height="19" fill="#999"/><rect x="109.14999999999999" y="374.55" width="18" height="7" fill="#c4c4c4"/><rect x="112.14999999999999" y="380.55" width="12" height="8" fill="#6e6e6e"/><rect x="109.14999999999999" y="389.55" width="18" height="4" fill="#aaa"/>
<rect x="114.5" y="401.5" width="10" height="10" fill="#fff" stroke="#a8d0d4" stroke-width="1"/><path d="M116.5,406.5H122.5" stroke="#000" stroke-width="1.6"/><path d="M119.5,403.5V409.5" stroke="#000" stroke-width="1.6"/><rect x="133.6" y="398.4" width="19" height="5.5" fill="#8e8e8e"/><rect x="133.6" y="398.4" width="19" height="2" fill="#b5b5b5"/><rect x="135.6" y="399.9" width="4" height="2.5" fill="#eee"/><rect x="133.6" y="404.9" width="19" height="5.5" fill="#8e8e8e"/><rect x="133.6" y="404.9" width="19" height="2" fill="#b5b5b5"/><rect x="135.6" y="406.4" width="4" height="2.5" fill="#eee"/><rect x="133.6" y="411.4" width="19" height="5.5" fill="#8e8e8e"/><rect x="133.6" y="411.4" width="19" height="2" fill="#b5b5b5"/><rect x="135.6" y="412.9" width="4" height="2.5" fill="#eee"/>
<rect x="114.5" y="424.5" width="10" height="10" fill="#fff" stroke="#a8d0d4" stroke-width="1"/><path d="M116.5,429.5H122.5" stroke="#000" stroke-width="1.6"/><path d="M119.5,426.5V432.5" stroke="#000" stroke-width="1.6"/><rect x="133.6" y="421.75" width="19" height="5.5" fill="#8e8e8e"/><rect x="133.6" y="421.75" width="19" height="2" fill="#b5b5b5"/><rect x="135.6" y="423.25" width="4" height="2.5" fill="#eee"/><rect x="133.6" y="428.25" width="19" height="5.5" fill="#8e8e8e"/><rect x="133.6" y="428.25" width="19" height="2" fill="#b5b5b5"/><rect x="135.6" y="429.75" width="4" height="2.5" fill="#eee"/><rect x="133.6" y="434.75" width="19" height="5.5" fill="#8e8e8e"/><rect x="133.6" y="434.75" width="19" height="2" fill="#b5b5b5"/><rect x="135.6" y="436.25" width="4" height="2.5" fill="#eee"/>
</svg>
<div class="abs" style="left:92px;top:452px;width:404px;height:1px;background:#b0b0b0"></div>
<div class="abs" style="left:9px;top:449px;width:83px;height:29px;background:#fff;border:1px solid #999;border-top:none;border-radius:0 0 5px 5px"></div>
<div class="abs" style="left:92px;top:452px;width:1px;height:24px;background:#aaa"></div>
<div class="abs" style="left:36.5px;top:455.5px;font-size:15px;line-height:18px;color:#1b47a0;white-space:nowrap;transform:scaleX(0.8377);transform-origin:0 50%;">Modules</div>
<div class="abs" style="left:118.7px;top:455.5px;font-size:15px;line-height:18px;color:#111;white-space:nowrap;transform:scaleX(0.7822);transform-origin:0 50%;">POUs</div>
<svg class="abs" style="left:12px;top:454px" width="110" height="22" viewBox="0 0 110 22"><path d="M2,6L6,4L10,6V15L6,17L2,15Z" fill="#666" stroke="#222"/><path d="M10,5L14,3L18,5V13L14,16L10,14Z" fill="#888" stroke="#222"/><path d="M5,3L9,2L13,3" stroke="#333" fill="none"/><path d="M6,8V17M14,7V15" stroke="#ddd"/><path d="M86,3H96L101,8V21H86Z" fill="#fff" stroke="#444"/><path d="M96,3V8H101Z" fill="#3a6ad0" stroke="#2a4aa0"/><path d="M89,11H98M89,13.5H98M89,16H98M89,18.5H98" stroke="#9bd"/><path d="M84,5V20" stroke="#888"/></svg>
<div class="abs" style="left:9px;top:504px;width:487px;height:28px;background:#001f3f;border-left:1px solid #888"></div>
<div class="abs" style="left:15.5px;top:510.5px;font-size:14px;line-height:17px;color:#f4f4f4;white-space:nowrap;transform:scaleX(0.9177);transform-origin:0 50%;">Devices</div>
<svg class="abs" style="left:420px;top:511px" width="76" height="16" viewBox="0 0 76 16"><path d="M5,6H16L10.5,11.5Z" fill="#fff"/><path d="M33,2H39M34,2V8M38.5,2V8M31.5,8.5H41M36,9V14" stroke="#fff" stroke-width="1.6" fill="none"/><path d="M56.5,3.5L65.5,12.5M65.5,3.5L56.5,12.5" stroke="#fff" stroke-width="2.4"/></svg>
<div class="abs" style="left:9px;top:532px;width:487px;height:1px;background:#000"></div>
<div class="abs" style="left:453px;top:533px;width:21px;height:21px;background:#fff;border:1px solid #aaa;border-top:none"></div><svg class="abs" style="left:457px;top:540px" width="12" height="7"><path d="M0.5,0.5H11.5L6,6.5Z" fill="#000"/></svg>
<div class="abs" style="left:474px;top:533px;width:22px;height:21px;background:#fff;border-left:1px solid #bbb;border-top:1px solid #ddd;border-right:2px solid #000;border-bottom:2px solid #000"></div><svg class="abs" style="left:479px;top:540px" width="10" height="6"><path d="M0,6H10L5,0.5Z" fill="#0a3c8c"/></svg>
<div class="abs hatch" style="left:474px;top:554px;width:21px;height:275px"></div>
<div class="abs" style="left:474px;top:620px;width:22px;height:67px;background:#fff;border-left:1px solid #ccc;border-right:2px solid #000;border-bottom:2px solid #000"></div>
<div class="abs" style="left:474px;top:829px;width:22px;height:20px;background:#fff;border-left:1px solid #bbb;border-top:1px solid #ddd;border-right:2px solid #000;border-bottom:2px solid #000"></div><svg class="abs" style="left:479px;top:837px" width="10" height="6"><path d="M0,0H10L5,5.5Z" fill="#0a3c8c"/></svg>
<div class="abs" style="left:9px;top:533px;width:465px;height:316px;overflow:hidden">
<svg class="abs" style="left:-9px;top:-533px" width="462" height="870" viewBox="0 0 462 870"><path d="M121.5,533V849M146.5,533V849" stroke="#aaa" stroke-dasharray="1,2"/><path d="M147,545.5H157" stroke="#aaa" stroke-dasharray="1,2"/><path d="M162,536H172L176,540V553H162Z" fill="#fff" stroke="#333"/><path d="M171,543H174M171,546H174M169,549H174" stroke="#888"/><rect x="164" y="538" width="7" height="7" fill="#d81818" stroke="#333" stroke-width="0.6"/><rect x="165.5" y="539.5" width="4" height="4" fill="#f0d020"/><rect x="164" y="545" width="7" height="6" fill="#2222b8" stroke="#333" stroke-width="0.6"/><rect x="166" y="546" width="4" height="3.5" fill="#e02890"/><rect x="158" y="542" width="7" height="7" fill="#20a020" stroke="#333" stroke-width="0.6"/><rect x="159.5" y="543.5" width="4" height="4" fill="#e8f020"/><path d="M147,569.5H157" stroke="#aaa" stroke-dasharray="1,2"/><path d="M162,560H172L176,564V577H162Z" fill="#fff" stroke="#333"/><path d="M171,567H174M171,570H174M169,573H174" stroke="#888"/><rect x="164" y="562" width="7" height="7" fill="#d81818" stroke="#333" stroke-width="0.6"/><rect x="165.5" y="563.5" width="4" height="4" fill="#f0d020"/><rect x="164" y="569" width="7" height="6" fill="#2222b8" stroke="#333" stroke-width="0.6"/><rect x="166" y="570" width="4" height="3.5" fill="#e02890"/><rect x="158" y="566" width="7" height="7" fill="#20a020" stroke="#333" stroke-width="0.6"/><rect x="159.5" y="567.5" width="4" height="4" fill="#e8f020"/><path d="M147,592.5H157" stroke="#aaa" stroke-dasharray="1,2"/><path d="M162,583H172L176,587V600H162Z" fill="#fff" stroke="#333"/><path d="M171,590H174M171,593H174M169,596H174" stroke="#888"/><rect x="164" y="585" width="7" height="7" fill="#d81818" stroke="#333" stroke-width="0.6"/><rect x="165.5" y="586.5" width="4" height="4" fill="#f0d020"/><rect x="164" y="592" width="7" height="6" fill="#2222b8" stroke="#333" stroke-width="0.6"/><rect x="166" y="593" width="4" height="3.5" fill="#e02890"/><rect x="158" y="589" width="7" height="7" fill="#20a020" stroke="#333" stroke-width="0.6"/><rect x="159.5" y="590.5" width="4" height="4" fill="#e8f020"/><path d="M147,615.5H157" stroke="#aaa" stroke-dasharray="1,2"/><path d="M162,606H172L176,610V623H162Z" fill="#fff" stroke="#333"/><path d="M171,613H174M171,616H174M169,619H174" stroke="#888"/><rect x="164" y="608" width="7" height="7" fill="#d81818" stroke="#333" stroke-width="0.6"/><rect x="165.5" y="609.5" width="4" height="4" fill="#f0d020"/><rect x="164" y="615" width="7" height="6" fill="#2222b8" stroke="#333" stroke-width="0.6"/><rect x="166" y="616" width="4" height="3.5" fill="#e02890"/><rect x="158" y="612" width="7" height="7" fill="#20a020" stroke="#333" stroke-width="0.6"/><rect x="159.5" y="613.5" width="4" height="4" fill="#e8f020"/><path d="M147,639.5H157" stroke="#aaa" stroke-dasharray="1,2"/><path d="M162,630H172L176,634V647H162Z" fill="#fff" stroke="#333"/><path d="M171,637H174M171,640H174M169,643H174" stroke="#888"/><rect x="164" y="632" width="7" height="7" fill="#d81818" stroke="#333" stroke-width="0.6"/><rect x="165.5" y="633.5" width="4" height="4" fill="#f0d020"/><rect x="164" y="639" width="7" height="6" fill="#2222b8" stroke="#333" stroke-width="0.6"/><rect x="166" y="640" width="4" height="3.5" fill="#e02890"/><rect x="158" y="636" width="7" height="7" fill="#20a020" stroke="#333" stroke-width="0.6"/><rect x="159.5" y="637.5" width="4" height="4" fill="#e8f020"/><path d="M147,662.5H157" stroke="#aaa" stroke-dasharray="1,2"/><path d="M162,653H172L176,657V670H162Z" fill="#fff" stroke="#333"/><path d="M171,660H174M171,663H174M169,666H174" stroke="#888"/><rect x="164" y="655" width="7" height="7" fill="#d81818" stroke="#333" stroke-width="0.6"/><rect x="165.5" y="656.5" width="4" height="4" fill="#f0d020"/><rect x="164" y="662" width="7" height="6" fill="#2222b8" stroke="#333" stroke-width="0.6"/><rect x="166" y="663" width="4" height="3.5" fill="#e02890"/><rect x="158" y="659" width="7" height="7" fill="#20a020" stroke="#333" stroke-width="0.6"/><rect x="159.5" y="660.5" width="4" height="4" fill="#e8f020"/><path d="M147,685.5H157" stroke="#aaa" stroke-dasharray="1,2"/><path d="M162,676H172L176,680V693H162Z" fill="#fff" stroke="#333"/><path d="M171,683H174M171,686H174M169,689H174" stroke="#888"/><rect x="164" y="678" width="7" height="7" fill="#d81818" stroke="#333" stroke-width="0.6"/><rect x="165.5" y="679.5" width="4" height="4" fill="#f0d020"/><rect x="164" y="685" width="7" height="6" fill="#2222b8" stroke="#333" stroke-width="0.6"/><rect x="166" y="686" width="4" height="3.5" fill="#e02890"/><rect x="158" y="682" width="7" height="7" fill="#20a020" stroke="#333" stroke-width="0.6"/><rect x="159.5" y="683.5" width="4" height="4" fill="#e8f020"/><path d="M147,709.5H157" stroke="#aaa" stroke-dasharray="1,2"/><path d="M162,700H172L176,704V717H162Z" fill="#fff" stroke="#333"/><path d="M171,707H174M171,710H174M169,713H174" stroke="#888"/><rect x="164" y="702" width="7" height="7" fill="#d81818" stroke="#333" stroke-width="0.6"/><rect x="165.5" y="703.5" width="4" height="4" fill="#f0d020"/><rect x="164" y="709" width="7" height="6" fill="#2222b8" stroke="#333" stroke-width="0.6"/><rect x="166" y="710" width="4" height="3.5" fill="#e02890"/><rect x="158" y="706" width="7" height="7" fill="#20a020" stroke="#333" stroke-width="0.6"/><rect x="159.5" y="707.5" width="4" height="4" fill="#e8f020"/><path d="M147,732.5H157" stroke="#aaa" stroke-dasharray="1,2"/><path d="M162,723H172L176,727V740H162Z" fill="#fff" stroke="#333"/><path d="M171,730H174M171,733H174M169,736H174" stroke="#888"/><rect x="164" y="725" width="7" height="7" fill="#d81818" stroke="#333" stroke-width="0.6"/><rect x="165.5" y="726.5" width="4" height="4" fill="#f0d020"/><rect x="164" y="732" width="7" height="6" fill="#2222b8" stroke="#333" stroke-width="0.6"/><rect x="166" y="733" width="4" height="3.5" fill="#e02890"/><rect x="158" y="729" width="7" height="7" fill="#20a020" stroke="#333" stroke-width="0.6"/><rect x="159.5" y="730.5" width="4" height="4" fill="#e8f020"/><path d="M147,755.5H157" stroke="#aaa" stroke-dasharray="1,2"/><path d="M162,746H172L176,750V763H162Z" fill="#fff" stroke="#333"/><path d="M171,753H174M171,756H174M169,759H174" stroke="#888"/><rect x="164" y="748" width="7" height="7" fill="#d81818" stroke="#333" stroke-width="0.6"/><rect x="165.5" y="749.5" width="4" height="4" fill="#f0d020"/><rect x="164" y="755" width="7" height="6" fill="#2222b8" stroke="#333" stroke-width="0.6"/><rect x="166" y="756" width="4" height="3.5" fill="#e02890"/><rect x="158" y="752" width="7" height="7" fill="#20a020" stroke="#333" stroke-width="0.6"/><rect x="159.5" y="753.5" width="4" height="4" fill="#e8f020"/><path d="M147,779.5H157" stroke="#aaa" stroke-dasharray="1,2"/><path d="M162,770H172L176,774V787H162Z" fill="#fff" stroke="#333"/><path d="M171,777H174M171,780H174M169,783H174" stroke="#888"/><rect x="164" y="772" width="7" height="7" fill="#d81818" stroke="#333" stroke-width="0.6"/><rect x="165.5" y="773.5" width="4" height="4" fill="#f0d020"/><rect x="164" y="779" width="7" height="6" fill="#2222b8" stroke="#333" stroke-width="0.6"/><rect x="166" y="780" width="4" height="3.5" fill="#e02890"/><rect x="158" y="776" width="7" height="7" fill="#20a020" stroke="#333" stroke-width="0.6"/><rect x="159.5" y="777.5" width="4" height="4" fill="#e8f020"/><path d="M147,802.5H157" stroke="#aaa" stroke-dasharray="1,2"/><path d="M162,793H172L176,797V810H162Z" fill="#fff" stroke="#333"/><path d="M171,800H174M171,803H174M169,806H174" stroke="#888"/><rect x="164" y="795" width="7" height="7" fill="#d81818" stroke="#333" stroke-width="0.6"/><rect x="165.5" y="796.5" width="4" height="4" fill="#f0d020"/><rect x="164" y="802" width="7" height="6" fill="#2222b8" stroke="#333" stroke-width="0.6"/><rect x="166" y="803" width="4" height="3.5" fill="#e02890"/><rect x="158" y="799" width="7" height="7" fill="#20a020" stroke="#333" stroke-width="0.6"/><rect x="159.5" y="800.5" width="4" height="4" fill="#e8f020"/><path d="M147,825.5H157" stroke="#aaa" stroke-dasharray="1,2"/><path d="M162,816H172L176,820V833H162Z" fill="#fff" stroke="#333"/><path d="M171,823H174M171,826H174M169,829H174" stroke="#888"/><rect x="164" y="818" width="7" height="7" fill="#d81818" stroke="#333" stroke-width="0.6"/><rect x="165.5" y="819.5" width="4" height="4" fill="#f0d020"/><rect x="164" y="825" width="7" height="6" fill="#2222b8" stroke="#333" stroke-width="0.6"/><rect x="166" y="826" width="4" height="3.5" fill="#e02890"/><rect x="158" y="822" width="7" height="7" fill="#20a020" stroke="#333" stroke-width="0.6"/><rect x="159.5" y="823.5" width="4" height="4" fill="#e8f020"/><path d="M147,849.5H157" stroke="#aaa" stroke-dasharray="1,2"/><path d="M162,840H172L176,844V857H162Z" fill="#fff" stroke="#333"/><path d="M171,847H174M171,850H174M169,853H174" stroke="#888"/><rect x="164" y="842" width="7" height="7" fill="#d81818" stroke="#333" stroke-width="0.6"/><rect x="165.5" y="843.5" width="4" height="4" fill="#f0d020"/><rect x="164" y="849" width="7" height="6" fill="#2222b8" stroke="#333" stroke-width="0.6"/><rect x="166" y="850" width="4" height="3.5" fill="#e02890"/><rect x="158" y="846" width="7" height="7" fill="#20a020" stroke="#333" stroke-width="0.6"/><rect x="159.5" y="847.5" width="4" height="4" fill="#e8f020"/></svg>
<div class="abs" style="left:174.5px;top:3.5px;font-size:15px;line-height:18px;color:#111;white-space:nowrap;transform:scaleX(0.8351);transform-origin:0 50%;">Page_Building</div>
<div class="abs" style="left:174.5px;top:26.9px;font-size:15px;line-height:18px;color:#111;white-space:nowrap;transform:scaleX(0.8511);transform-origin:0 50%;">Page_Building_Bathroom</div>
<div class="abs" style="left:174.5px;top:50.2px;font-size:15px;line-height:18px;color:#111;white-space:nowrap;transform:scaleX(0.8597);transform-origin:0 50%;">Page_Building_Bathroom_LightBath1</div>
<div class="abs" style="left:174.5px;top:73.5px;font-size:15px;line-height:18px;color:#111;white-space:nowrap;transform:scaleX(0.8597);transform-origin:0 50%;">Page_Building_Bathroom_LightBath2</div>
<div class="abs" style="left:174.5px;top:96.9px;font-size:15px;line-height:18px;color:#111;white-space:nowrap;transform:scaleX(0.8580);transform-origin:0 50%;">Page_Building_Bathroom_SwitchBath</div>
<div class="abs" style="left:174.5px;top:120.2px;font-size:15px;line-height:18px;color:#111;white-space:nowrap;transform:scaleX(0.8490);transform-origin:0 50%;">Page_Building_Kitchen</div>
<div class="abs" style="left:174.5px;top:143.6px;font-size:15px;line-height:18px;color:#111;white-space:nowrap;transform:scaleX(0.8549);transform-origin:0 50%;">Page_Building_Kitchen_BlinkExtractorHood</div>
<div class="abs" style="left:174.5px;top:167.0px;font-size:15px;line-height:18px;color:#111;white-space:nowrap;transform:scaleX(0.8826);transform-origin:0 50%;">Page_Building_Kitchen_InverterExtractorHood</div>
<div class="abs" style="left:174.5px;top:190.3px;font-size:15px;line-height:18px;color:#111;white-space:nowrap;transform:scaleX(0.8708);transform-origin:0 50%;">Page_Building_Kitchen_InverterKitchen</div>
<div class="abs" style="left:174.5px;top:213.6px;font-size:15px;line-height:18px;color:#111;white-space:nowrap;transform:scaleX(0.8527);transform-origin:0 50%;">Page_Building_Kitchen_LightKitchen</div>
<div class="abs" style="left:174.5px;top:237.0px;font-size:15px;line-height:18px;color:#111;white-space:nowrap;transform:scaleX(0.8383);transform-origin:0 50%;">Page_Building_LivingRoom</div>
<div class="abs" style="left:174.5px;top:260.4px;font-size:15px;line-height:18px;color:#111;white-space:nowrap;transform:scaleX(0.8350);transform-origin:0 50%;">Page_Building_LivingRoom_Blink</div>
<div class="abs" style="left:174.5px;top:283.7px;font-size:15px;line-height:18px;color:#111;white-space:nowrap;transform:scaleX(0.8488);transform-origin:0 50%;">Page_Building_LivingRoom_Light1</div>
<div class="abs" style="left:174.5px;top:307.0px;font-size:15px;line-height:18px;color:#111;white-space:nowrap;transform:scaleX(0.8488);transform-origin:0 50%;">Page_Building_LivingRoom_Light2</div>
</div>
<div class="abs" style="left:9px;top:849px;width:487px;height:1px;background:#bbb"></div>
<div class="abs" style="left:9px;top:868px;width:487px;height:2px;background:#000"></div>
<div class="abs" style="left:10px;top:850px;width:20px;height:18px;background:#fff;border-right:2px solid #000"></div>
<svg class="abs" style="left:15px;top:853px" width="7" height="11"><path d="M6.5,0V11L0.5,5.5Z" fill="#0a3c8c"/></svg>
<div class="abs" style="left:30px;top:850px;width:380px;height:18px;background:#fff;border-right:2px solid #000"></div>
<div class="abs hatch" style="left:410px;top:850px;width:45px;height:18px"></div>
<div class="abs" style="left:455px;top:850px;width:20px;height:18px;background:#fff;border-right:2px solid #000;border-left:1px solid #bbb"></div>
<svg class="abs" style="left:462px;top:853px" width="7" height="11"><path d="M0.5,0V11L6.5,5.5Z" fill="#0a3c8c"/></svg>
<div class="abs" style="left:9px;top:901px;width:1385px;height:1px;background:#aaa"></div>
<div class="abs" style="left:11px;top:873px;width:164px;height:29px;background:#fff;border:1px solid #777;border-bottom:none;border-radius:5px 5px 0 0"></div>
<div class="abs" style="left:44.0px;top:877.5px;font-size:14.5px;line-height:17px;color:#111;white-space:nowrap;transform:scaleX(0.9277);transform-origin:0 50%;">Cross Reference List</div>
<svg class="abs" style="left:17px;top:878px" width="16" height="16"><rect x="0.5" y="0.5" width="13" height="14" fill="#fff" stroke="#222"/><rect x="0.5" y="0.5" width="13" height="3" fill="#1a1a8a"/><path d="M3,6H9M3,8H7" stroke="#aaa"/><path d="M5,7L12,14M12,7L5,14" stroke="#a01080" stroke-width="2"/></svg>
<div class="abs" style="left:501px;top:133px;width:866px;height:1px;background:#a8a8a8"></div>
<svg class="abs" style="left:500px;top:134px" width="868" height="30" viewBox="500 134 868 30"><path d="M501.5,158C508,158 509.5,156 513,151.5L522.5,140.5C524.5,138 526,137.2 530,137.2H674C677.5,137.2 679.3,139 679.3,142.5V155C679.3,157 680.3,158 682.5,158H1367" fill="#fff" stroke="#2f4f72" stroke-width="1.3"/><path d="M529.5,139.4H539.5L543.5,143.4V156.4H529.5Z" fill="#fff" stroke="#333"/><path d="M538.5,146.4H541.5M538.5,149.4H541.5M536.5,152.4H541.5" stroke="#888"/><rect x="531.5" y="141.4" width="7" height="7" fill="#d81818" stroke="#333" stroke-width="0.6"/><rect x="533.0" y="142.9" width="4" height="4" fill="#f0d020"/><rect x="531.5" y="148.4" width="7" height="6" fill="#2222b8" stroke="#333" stroke-width="0.6"/><rect x="533.5" y="149.4" width="4" height="3.5" fill="#e02890"/><rect x="525.5" y="145.4" width="7" height="7" fill="#20a020" stroke="#333" stroke-width="0.6"/><rect x="527.0" y="146.9" width="4" height="4" fill="#e8f020"/><path d="M663.5,144.5L672.5,153.5M672.5,144.5L663.5,153.5" stroke="#000" stroke-width="2.6"/></svg>
<div class="abs" style="left:554.4px;top:139.2px;font-size:15px;line-height:18px;color:#0c54a8;font-weight:700;white-space:nowrap;transform:scaleX(0.9233);transform-origin:0 50%;">Page_Building</div>
<svg class="abs" style="left:1350px;top:146px" width="11" height="6"><path d="M0,0H11L5.5,5.5Z" fill="#0a3c8c"/></svg>
<div class="abs" style="left:502px;top:161px;width:865px;height:7px;border:1px solid #b0b0b0;background:#fff"></div>
<svg class="abs" style="left:915px;top:159px" width="40" height="10"><path d="M5,8L10,2.5L15,8Z" fill="#fff" stroke="#bbb"/><path d="M22,2H36L29,8.5Z" fill="#333"/><path d="M25,3.5H33L29,6.5Z" fill="#999"/></svg>
<div class="abs" style="left:501px;top:133px;width:1px;height:737px;background:#888"></div>
<div class="abs" style="left:1366px;top:133px;width:1px;height:737px;background:#999"></div>
<div class="abs" style="left:501px;top:869px;width:866px;height:1px;background:#888"></div>
<div class="abs hatch" style="left:1345px;top:169px;width:21px;height:660px"></div>
<div class="abs" style="left:1345px;top:168px;width:21px;height:21px;background:#fff;border-left:1px solid #bbb;border-top:1px solid #ddd;border-right:2px solid #000;border-bottom:2px solid #000"></div><svg class="abs" style="left:1350px;top:175px" width="10" height="6"><path d="M0,6H10L5,0.5Z" fill="#0a3c8c"/></svg>
<div class="abs" style="left:1345px;top:189px;width:21px;height:189px;background:#fff;border-left:2px solid #b8b8b8;border-right:2px solid #000;border-bottom:2px solid #000"></div>
<div class="abs" style="left:1345px;top:829px;width:21px;height:20px;background:#fff;border-left:1px solid #bbb;border-top:1px solid #ddd;border-right:2px solid #000;border-bottom:2px solid #000"></div><svg class="abs" style="left:1350px;top:836px" width="10" height="6"><path d="M0,0H10L5,5.5Z" fill="#0a3c8c"/></svg>
<div class="abs" style="left:1266px;top:825px;width:55px;height:24px;background:#fff;border:1px solid #999"></div>
<div class="abs" style="left:1277.4px;top:829.3px;font-size:14.5px;line-height:17px;color:#222;white-space:nowrap;transform:scaleX(0.8771);transform-origin:0 50%;">75 %</div>
<div class="abs" style="left:1320px;top:825px;width:25px;height:24px;background:#fff;border:1px solid #999"></div>
<svg class="abs" style="left:1322px;top:826px" width="22" height="22"><path d="M1,9H8L11,12V21H1Z" fill="#ddd" stroke="#333"/><circle cx="10" cy="8" r="5.5" fill="#cfeaf0" stroke="#222" stroke-width="1.5"/><path d="M7,7H13M7,9H11" stroke="#3a9"/><path d="M14,12L20,20" stroke="#111" stroke-width="2.6"/></svg>
<div class="abs" style="left:502px;top:849px;width:843px;height:1px;background:#ccc"></div>
<div class="abs hatch" style="left:502px;top:850px;width:823px;height:19px"></div>
<div class="abs" style="left:502px;top:850px;width:21px;height:19px;background:#fff;border-right:2px solid #000;border-bottom:2px solid #000"></div><svg class="abs" style="left:508px;top:853px" width="7" height="11"><path d="M6.5,0V11L0.5,5.5Z" fill="#0a3c8c"/></svg>
<div class="abs" style="left:523px;top:850px;width:220px;height:19px;background:#fff;border-right:2px solid #000;border-bottom:2px solid #000"></div>
<div class="abs" style="left:1324px;top:850px;width:21px;height:19px;background:#fff;border-left:1px solid #bbb;border-right:2px solid #000;border-bottom:2px solid #000"></div><svg class="abs" style="left:1332px;top:853px" width="7" height="11"><path d="M0.5,0V11L6.5,5.5Z" fill="#0a3c8c"/></svg>
<div class="abs" style="left:1345px;top:849px;width:21px;height:20px;background:#fff"></div>
<div class="abs" style="left:1369px;top:135px;width:25px;height:86px;background:#fff;border:1px solid #555;border-right:none;border-radius:6px 0 0 6px"></div>
<div class="abs" style="left:1369px;top:221px;width:25px;height:99px;background:#fff;border:1px solid #555;border-right:none;border-radius:6px 0 0 6px"></div>
<div class="abs" style="left:1389px;top:167px;font-size:14px;color:#111;transform:rotate(90deg);transform-origin:0 0;white-space:nowrap;letter-spacing:0.45px">ToolBox</div>
<div class="abs" style="left:1389px;top:252.5px;font-size:14px;color:#111;transform:rotate(90deg);transform-origin:0 0;white-space:nowrap;letter-spacing:0.25px">Properties</div>
<svg class="abs" style="left:1372px;top:138px" width="20" height="22"><path d="M2,2L16,18M16,2L4,16" stroke="#333" stroke-width="2"/><path d="M12,2A4,4 0 1 0 18,7" fill="none" stroke="#666" stroke-width="2"/><path d="M8,16L14,13L17,17L11,20Z" fill="#b8a020"/></svg>
<svg class="abs" style="left:1372px;top:224px" width="20" height="22"><rect x="1" y="1" width="15" height="16" fill="#bbb" stroke="#333"/><rect x="3" y="3" width="5" height="3" fill="#fff"/><rect x="3" y="8" width="5" height="3" fill="#fff"/><path d="M10,4H14M10,9H14" stroke="#333"/><path d="M10,12L15,8L18,12V18H11Z" fill="#ccc" stroke="#333"/><path d="M13,19H19" stroke="#1a1a9a" stroke-width="2"/></svg>
<svg class="abs" style="left:502px;top:169px" width="843" height="680" viewBox="502 169 843 680" font-family="Liberation Sans, sans-serif">
<defs>
<radialGradient id="og" cx="50%" cy="58%" r="62%"><stop offset="0" stop-color="#fbe000"/><stop offset="0.3" stop-color="#f8b800"/><stop offset="0.7" stop-color="#f08400"/><stop offset="1" stop-color="#d05800"/></radialGradient>
<linearGradient id="oh" x1="0" y1="0" x2="0" y2="1"><stop offset="0" stop-color="#c85000" stop-opacity="0.75"/><stop offset="1" stop-color="#f09a20" stop-opacity="0.55"/></linearGradient>
<linearGradient id="ring" x1="0" y1="0" x2="1" y2="1"><stop offset="0" stop-color="#ffffff"/><stop offset="0.45" stop-color="#d8d8d8"/><stop offset="0.6" stop-color="#b8b8b8"/><stop offset="1" stop-color="#f4ffff"/></linearGradient>
<radialGradient id="gg" cx="38%" cy="35%" r="75%"><stop offset="0" stop-color="#a6a6a6"/><stop offset="0.6" stop-color="#7c7c7c"/><stop offset="1" stop-color="#5e5e5e"/></radialGradient>
<radialGradient id="gg2" cx="50%" cy="40%" r="70%"><stop offset="0" stop-color="#a8a8a8"/><stop offset="1" stop-color="#8c8c8c"/></radialGradient>
<linearGradient id="ring2" x1="0" y1="0" x2="1" y2="1"><stop offset="0" stop-color="#d0d0d0"/><stop offset="0.3" stop-color="#b4b4b4"/><stop offset="0.55" stop-color="#e6e6e6"/><stop offset="0.75" stop-color="#c0c0c0"/><stop offset="1" stop-color="#d0f0f4"/></linearGradient>
<pattern id="grid" x="517.9" y="507.5" width="21.6" height="23" patternUnits="userSpaceOnUse"><rect width="21.6" height="23" fill="#cbcbcb"/><path d="M21.1,0V23M0,22.5H21.6" stroke="#bcbcbc" stroke-width="0.9"/></pattern>
</defs>
<rect x="560.5" y="178.3" width="12.5" height="332.7" fill="#1c1b19"/>
<rect x="577" y="178.3" width="758" height="586.7" fill="#1c1b19"/>
<rect x="1038.4" y="174" width="296.6" height="6" fill="#1c1b19"/>
<rect x="502" y="511" width="75" height="289" fill="#fff"/>
<rect x="564.4" y="742.7" width="101.6" height="22.3" fill="#1c1b19"/>
<rect x="577" y="511" width="68" height="231.7" fill="#fff"/>
<rect x="513" y="512" width="132" height="230.7" fill="#fff" stroke="#888" stroke-width="1"/>
<rect x="517" y="515.6" width="127.4" height="223.9" fill="url(#grid)" stroke="#555" stroke-width="1"/>
<rect x="645" y="512" width="14.5" height="230.7" fill="#fff" stroke="#666" stroke-width="1"/>
<path d="M650,512V742.7M654.5,580V742.7M645,580H659.5M645,574H659.5" stroke="#777" stroke-width="1" fill="none"/>
<path d="M590,192.7H1038.4V492H644V497.7H590Z" fill="#e5b971"/>
<rect x="1047" y="192.6" width="199" height="213.0" fill="#e5b971"/>
<rect x="1254" y="192.6" width="68" height="85.4" fill="#b1b9c1"/>
<rect x="1254" y="288.7" width="68" height="116.9" fill="#b1b9c1"/>
<path d="M1047,419.8H1322V751.6H1225V580H1047Z" fill="#aaaaaa"/>
<path d="M666,502H1034.6V751.4H666V742.7H659.5V512H666Z" fill="#f1c996"/>
<rect x="1047" y="588.4" width="109.4" height="163.2" fill="#abbed8"/>
<rect x="1156.4" y="588.4" width="60.6" height="163.2" fill="#fff"/>
<path d="M1156.9,588.4V751.6" stroke="#556" stroke-width="1"/>
<rect x="1038.4" y="420" width="8.6" height="71.6" fill="#fff" stroke="#888" stroke-width="0.8"/>
<rect x="1034.6" y="502" width="12.4" height="71.4" fill="#fff" stroke="#888" stroke-width="0.8"/>
<rect x="1246" y="215.5" width="8" height="62.5" fill="#fff" stroke="#888" stroke-width="0.8"/>
<rect x="1081" y="405.6" width="76" height="14.2" fill="#fff"/>
<path d="M1086,405.6V419.8M1152,405.6V419.8" stroke="#444" stroke-width="0.9"/>
<rect x="1258" y="405.6" width="60" height="14.2" fill="#fff"/>
<path d="M1263,405.6V419.8M1313,405.6V419.8" stroke="#444" stroke-width="0.9"/>
<rect x="1081" y="580" width="58.7" height="8.4" fill="#fff"/>
<path d="M1085,580V588.4M1135.5,580V588.4" stroke="#444" stroke-width="0.9"/>
<rect x="1237.5" y="751.6" width="75.9" height="13.4" fill="#fff"/>
<path d="M1237.5,752H1313.4" stroke="#333" stroke-width="0.9"/><path d="M1237.5,764.6H1313.4" stroke="#999" stroke-width="1"/><path d="M1241.5,751.6V765M1309,751.6V765" stroke="#444" stroke-width="0.9"/>
<rect x="797.6" y="178.3" width="155.8" height="14.2" fill="#fff"/>
<rect x="797.6" y="178.3" width="155.8" height="3.2" fill="#b2b2b2"/>
<rect x="797.6" y="189.3" width="155.8" height="3.2" fill="#b2b2b2"/>
<path d="M801.6,181.3V189.5M949.4,181.3V189.5" stroke="#777" stroke-width="0.9" fill="none"/><path d="M798.1,178.3V192.5M952.9,178.3V192.5" stroke="#aaa" stroke-width="1"/>
<rect x="1148.7" y="174" width="84.3" height="18.6" fill="#fff"/>
<path d="M1148.7,177.6H1233" stroke="#8a8a8a" stroke-width="1"/><path d="M1148.7,187.4H1233" stroke="#444" stroke-width="1"/><path d="M1148.7,191.6H1233" stroke="#b0b0b0" stroke-width="1"/><path d="M1152,177.6V187.4M1155,177.6V187.4M1226.5,177.6V187.4M1229.5,177.6V187.4" stroke="#777" stroke-width="0.8"/><path d="M1148.7,174.5H1233" stroke="#bbb" stroke-width="1"/>
<rect x="590" y="222" width="26" height="172.7" fill="#fff" stroke="#4a4a4a" stroke-width="1"/>
<rect x="651" y="272" width="51" height="55" fill="#fff" stroke="#4a4a4a" stroke-width="1"/>
<rect x="735" y="222" width="68.7" height="172.6" fill="#fff" stroke="#4a4a4a" stroke-width="1"/>
<path d="M735,234H803.7M786.7,234V383.7M735,283.4H786.7M735,332.7H786.7M735,383.7H803.7" stroke="#4a4a4a" stroke-width="1" fill="none"/>
<rect x="646" y="410" width="68" height="73.7" fill="#fff" stroke="#4a4a4a" stroke-width="1"/>
<path d="M657.7,410V483.7M702.4,410V483.7M657.7,465H702.4" stroke="#6a6a6a" stroke-width="1" fill="none"/>
<rect x="894" y="253" width="68" height="110" fill="#fff" stroke="#4a4a4a" stroke-width="1"/>
<path d="M890.5,262.6H868.5A10,18.5 0 0 0 868.5,299.6H890.5Z" fill="#fff" stroke="#4a4a4a" stroke-width="0.9"/><path d="M873.5,258.1C846.5,260.6 846.5,301.6 873.5,304.1L873.5,300.6C851.5,297.6 851.5,264.6 873.5,261.6Z" fill="#fff" stroke="#5a4a3a" stroke-width="1.3"/>
<path d="M890.5,317H868.5A10,18.5 0 0 0 868.5,354H890.5Z" fill="#fff" stroke="#4a4a4a" stroke-width="0.9"/><path d="M873.5,312.5C846.5,315 846.5,356 873.5,358.5L873.5,355C851.5,352 851.5,319 873.5,316Z" fill="#fff" stroke="#5a4a3a" stroke-width="1.3"/>
<path d="M966.3,262.6H988.3A10,18.5 0 0 1 988.3,299.6H966.3Z" fill="#fff" stroke="#4a4a4a" stroke-width="0.9"/><path d="M983.3,258.1C1010.3,260.6 1010.3,301.6 983.3,304.1L983.3,300.6C1005.3,297.6 1005.3,264.6 983.3,261.6Z" fill="#fff" stroke="#5a4a3a" stroke-width="1.3"/>
<path d="M966.3,317H988.3A10,18.5 0 0 1 988.3,354H966.3Z" fill="#fff" stroke="#4a4a4a" stroke-width="0.9"/><path d="M983.3,312.5C1010.3,315 1010.3,356 983.3,358.5L983.3,355C1005.3,352 1005.3,319 983.3,316Z" fill="#fff" stroke="#5a4a3a" stroke-width="1.3"/>
<path d="M1038.4,425L1009.8,433.4L1038.4,487" stroke="#2a2a2a" stroke-width="1.1" fill="none"/>
<path d="M1047,192.6H1210.7V246.9H1097.4V312H1047Z" fill="#fff"/>
<rect x="1047" y="312" width="50.4" height="56" fill="#fff" stroke="#666" stroke-width="0.9"/>
<circle cx="1061.3" cy="325.2" r="7" fill="#fff" stroke="#444" stroke-width="0.9"/><path d="M1056.3503,320.2503L1066.2496999999998,330.1497M1066.2496999999998,320.2503L1056.3503,330.1497" stroke="#444" stroke-width="0.9"/>
<circle cx="1082.6" cy="325.2" r="9" fill="#fff" stroke="#444" stroke-width="0.9"/><path d="M1076.2360999999999,318.8361L1088.9639,331.5639M1088.9639,318.8361L1076.2360999999999,331.5639" stroke="#444" stroke-width="0.9"/>
<circle cx="1061.3" cy="352.4" r="9" fill="#fff" stroke="#444" stroke-width="0.9"/><path d="M1054.9361,346.0361L1067.6639,358.7639M1067.6639,346.0361L1054.9361,358.7639" stroke="#444" stroke-width="0.9"/>
<circle cx="1082.6" cy="352.4" r="7" fill="#fff" stroke="#444" stroke-width="0.9"/><path d="M1077.6503,347.45029999999997L1087.5496999999998,357.3497M1087.5496999999998,347.45029999999997L1077.6503,357.3497" stroke="#444" stroke-width="0.9"/>
<rect x="1149.4" y="201.3" width="34.2" height="36.7" rx="4" fill="#fff" stroke="#555" stroke-width="0.9"/><circle cx="1165" cy="207" r="2" fill="none" stroke="#555" stroke-width="0.8"/>
<path d="M1254,218L1279,265L1254,272" stroke="#2a2a2a" stroke-width="1.1" fill="none"/>
<path d="M1086,420L1144,455.7L1153,420" stroke="#2a2a2a" stroke-width="1.1" fill="none"/>
<path d="M1263,420L1269.8,445.8L1310,421.4" stroke="#2a2a2a" stroke-width="1.1" fill="none"/>
<path d="M1085.6,580L1092.8,554L1134.5,580" stroke="#2a2a2a" stroke-width="1.1" fill="none"/>
<path d="M1241.9,752L1250.4,715.8L1308,752" stroke="#2a2a2a" stroke-width="1.1" fill="none"/>
<path d="M1034.6,505L1018,545M1024,566L1034.6,570" stroke="#2a2a2a" stroke-width="1.1" fill="none"/>
<path d="M649.7,517.4L623.9,566.3L651.3,572" stroke="#2a2a2a" stroke-width="1.1" fill="none"/>
<path d="M1157,596.4H1217" stroke="#666" stroke-width="0.9"/><rect x="1161.6" y="601.4" width="50" height="147" rx="24.5" fill="#fff" stroke="#555" stroke-width="0.9"/>
<path d="M1048,672L1063,670V702L1048,700Z" fill="#fff" stroke="#555" stroke-width="0.9"/><path d="M1063,671C1080,668 1103.6,672 1103.6,686C1103.6,700 1080,704 1063,701Z" fill="#fff" stroke="#555" stroke-width="0.9"/><path d="M1065,674C1080,672 1099,676 1099,686C1099,696 1080,700 1065,698" fill="none" stroke="#777" stroke-width="0.8"/><circle cx="1055" cy="686" r="1.5" fill="none" stroke="#555"/>
<rect x="1100.6" y="721.5" width="38.4" height="30" fill="#fff" stroke="#666" stroke-width="0.9"/><path d="M1105,726H1134L1131,747H1108Z" fill="#fff" stroke="#666" stroke-width="0.9"/><circle cx="1119.5" cy="741" r="2" fill="none" stroke="#555"/>
<rect x="737.2" y="716.6" width="33.4" height="34.8" fill="#fff" stroke="#4a4a4a" stroke-width="1"/>
<rect x="912.3" y="716.6" width="33.7" height="34.8" fill="#fff" stroke="#4a4a4a" stroke-width="1"/>
<rect x="770.6" y="582.4" width="141.7" height="169.0" fill="#fff" stroke="#4a4a4a" stroke-width="1"/>
<rect x="774.8" y="710.9" width="61.8" height="35.7" fill="#fff" stroke="#666" stroke-width="0.9"/>
<rect x="846" y="710.9" width="61.4" height="35.7" fill="#fff" stroke="#666" stroke-width="0.9"/>
<path d="M773,585H910V699L896,714H787L773,699Z" fill="#fff" stroke="#555" stroke-width="0.9"/>
<path d="M773,699H787V714M910,699H896V714" fill="none" stroke="#555" stroke-width="0.9"/>
<rect x="1000" y="596.5" width="34.6" height="154.9" fill="#fff" stroke="#4a4a4a" stroke-width="1"/>
<rect x="540.2" y="594.6" width="95.0" height="45.1" fill="#fff" stroke="#555" stroke-width="1"/>
<path d="M540.2,598.1H635.2M540.2,636.2H635.2" stroke="#555" stroke-width="0.9"/><rect x="576" y="594.6" width="38" height="3.5" fill="#333"/><rect x="576" y="636.2" width="38" height="3.5" fill="#333"/><path d="M548,598.1V636.2M557,598.1V636.2M566,598.1V636.2M575,598.1V636.2M584,598.1V636.2M592,598.1V636.2M600,598.1V636.2M608,598.1V636.2M616,598.1V636.2M625,598.1V636.2" stroke="#555" stroke-width="0.9"/><path d="M621,598.1V636.2" stroke="#333" stroke-width="1.6"/>
<rect x="540.2" y="670.9" width="95.0" height="46.0" fill="#fff" stroke="#555" stroke-width="1"/>
<path d="M540.2,674.4H635.2M540.2,713.4H635.2" stroke="#555" stroke-width="0.9"/><rect x="576" y="670.9" width="38" height="3.5" fill="#333"/><rect x="576" y="713.4" width="38" height="3.5" fill="#333"/><path d="M548,674.4V713.4M557,674.4V713.4M566,674.4V713.4M575,674.4V713.4M584,674.4V713.4M592,674.4V713.4M600,674.4V713.4M608,674.4V713.4M616,674.4V713.4M625,674.4V713.4" stroke="#555" stroke-width="0.9"/><path d="M621,674.4V713.4" stroke="#333" stroke-width="1.6"/>
<text x="797" y="211.1" font-size="16" fill="#2a2418" fill-opacity="0.88" textLength="35" lengthAdjust="spacingAndGlyphs">5 300</text>
<text x="1129" y="211.4" font-size="16" fill="#2a2418" fill-opacity="0.88" textLength="34" lengthAdjust="spacingAndGlyphs">2 350</text>
<text x="1276.6" y="211.4" font-size="16" fill="#2a2418" fill-opacity="0.88" textLength="22" lengthAdjust="spacingAndGlyphs">800</text>
<text x="1167" y="435.0" font-size="16" fill="#2a2418" fill-opacity="0.88" textLength="35" lengthAdjust="spacingAndGlyphs">3 250</text>
<text x="562" y="734.2" font-size="16" fill="#2a2418" fill-opacity="0.88" textLength="34" lengthAdjust="spacingAndGlyphs">1 550</text>
<text x="832.7" y="734.0" font-size="16" fill="#2a2418" fill-opacity="0.88" textLength="34" lengthAdjust="spacingAndGlyphs">4 360</text>
<text x="1114.7" y="733.6" font-size="16" fill="#2a2418" fill-opacity="0.88" textLength="34" lengthAdjust="spacingAndGlyphs">2 000</text>
<text x="1256" y="733.6" font-size="16" fill="#2a2418" fill-opacity="0.88" textLength="34" lengthAdjust="spacingAndGlyphs">1 150</text>
<text transform="translate(1019.3,342.6) rotate(-90)" font-size="16" fill="#2a2418" fill-opacity="0.88" text-anchor="middle" textLength="37" lengthAdjust="spacingAndGlyphs">3 300</text>
<text transform="translate(1230.6,299.6) rotate(-90)" font-size="16" fill="#2a2418" fill-opacity="0.88" text-anchor="middle" textLength="36" lengthAdjust="spacingAndGlyphs">2 350</text>
<text transform="translate(1066,499.90000000000003) rotate(-90)" font-size="16" fill="#2a2418" fill-opacity="0.88" text-anchor="middle" textLength="36" lengthAdjust="spacingAndGlyphs">1 770</text>
<text transform="translate(1306.7,586.0) rotate(-90)" font-size="16" fill="#2a2418" fill-opacity="0.88" text-anchor="middle" textLength="37" lengthAdjust="spacingAndGlyphs">3 650</text>
<text transform="translate(1019,627.0) rotate(-90)" font-size="16" fill="#2a2418" fill-opacity="0.88" text-anchor="middle" textLength="37" lengthAdjust="spacingAndGlyphs">2 750</text>
<text transform="translate(1066.7,672.6) rotate(-90)" font-size="16" fill="#2a2418" fill-opacity="0.88" text-anchor="middle" textLength="38" lengthAdjust="spacingAndGlyphs">1 800</text>
<text transform="translate(1307.5,235.29999999999998) rotate(-90)" font-size="16" fill="#2a2418" fill-opacity="0.88" text-anchor="middle" textLength="24.5" lengthAdjust="spacingAndGlyphs">900</text>
<text transform="translate(1307.5,347.40000000000003) rotate(-90)" font-size="16" fill="#2a2418" fill-opacity="0.88" text-anchor="middle" textLength="37.4" lengthAdjust="spacingAndGlyphs">1 500</text>
<text x="746.0" y="428.1" font-size="22.5" font-weight="bold" fill="#222120" stroke="#222120" stroke-width="1.1" stroke-linejoin="round" textLength="148" lengthAdjust="spacingAndGlyphs">Wohnzimmer</text>
<text x="780.7" y="558.4" font-size="22.5" font-weight="bold" fill="#222120" stroke="#222120" stroke-width="1.1" stroke-linejoin="round" textLength="158" lengthAdjust="spacingAndGlyphs">Schlafzimmer</text>
<text x="1111.4" y="306.5" font-size="22.5" font-weight="bold" fill="#222120" stroke="#222120" stroke-width="1.1" stroke-linejoin="round" textLength="71" lengthAdjust="spacingAndGlyphs">Küche</text>
<text x="1131.5" y="506.6" font-size="22.5" font-weight="bold" fill="#222120" stroke="#222120" stroke-width="1.1" stroke-linejoin="round" textLength="57" lengthAdjust="spacingAndGlyphs">Diele</text>
<text x="1261.3" y="243.2" font-size="22" font-weight="bold" fill="#222120" stroke="#222120" stroke-width="1.1" stroke-linejoin="round" textLength="58" lengthAdjust="spacingAndGlyphs">Abst.</text>
<text x="1261.3" y="354.2" font-size="22" font-weight="bold" fill="#222120" stroke="#222120" stroke-width="1.1" stroke-linejoin="round" textLength="58" lengthAdjust="spacingAndGlyphs">Abst.</text>
<text x="542.3" y="661.4" font-size="22" font-weight="bold" fill="#222120" stroke="#222120" stroke-width="1.1" stroke-linejoin="round" textLength="78" lengthAdjust="spacingAndGlyphs">Balkon</text>
<text x="1053.1" y="636.6" font-size="18.5" font-weight="bold" fill="#222120" stroke="#222120" stroke-width="0.7" stroke-linejoin="round" textLength="119" lengthAdjust="spacingAndGlyphs">Badezimmer</text>
<polygon points="590,211 605,207.1 605,214.9" fill="#1c1b19"/><polygon points="1038.4,211.5 1023.4000000000001,207.6 1023.4000000000001,215.4" fill="#1c1b19"/><polygon points="1024,193 1020.1,208 1027.9,208" fill="#1c1b19"/><polygon points="1047,212 1062,208.1 1062,215.9" fill="#1c1b19"/><polygon points="1246,211 1231,207.1 1231,214.9" fill="#1c1b19"/><polygon points="1236,193 1232.1,208 1239.9,208" fill="#1c1b19"/><polygon points="1236,405.6 1232.1,390.6 1239.9,390.6" fill="#1c1b19"/><polygon points="1254,211.5 1269,207.6 1269,215.4" fill="#1c1b19"/><polygon points="1322,211.5 1307,207.6 1307,215.4" fill="#1c1b19"/><polygon points="1310.5,193 1306.6,208 1314.4,208" fill="#1c1b19"/><polygon points="1310.5,278 1306.6,263 1314.4,263" fill="#1c1b19"/><polygon points="1310.5,289 1306.6,304 1314.4,304" fill="#1c1b19"/><polygon points="1310.5,405.6 1306.6,390.6 1314.4,390.6" fill="#1c1b19"/><polygon points="1020.7,491.6 1016.8000000000001,476.6 1024.6000000000001,476.6" fill="#1c1b19"/><polygon points="1020.7,502 1016.8000000000001,517 1024.6000000000001,517" fill="#1c1b19"/><polygon points="1047,437 1062,433.1 1062,440.9" fill="#1c1b19"/><polygon points="1068,420 1064.1,435 1071.9,435" fill="#1c1b19"/><polygon points="1322,437 1307,433.1 1307,440.9" fill="#1c1b19"/><polygon points="1309,420 1305.1,435 1312.9,435" fill="#1c1b19"/><polygon points="1067.6,580 1063.6999999999998,565 1071.5,565" fill="#1c1b19"/><polygon points="1225,736 1240,732.1 1240,739.9" fill="#1c1b19"/><polygon points="1322,736 1307,732.1 1307,739.9" fill="#1c1b19"/><polygon points="1308,751.6 1304.1,736.6 1311.9,736.6" fill="#1c1b19"/><polygon points="1034.6,736 1019.5999999999999,732.1 1019.5999999999999,739.9" fill="#1c1b19"/><polygon points="1021,751.4 1017.1,736.4 1024.9,736.4" fill="#1c1b19"/><polygon points="513,736 528,732.1 528,739.9" fill="#1c1b19"/><polygon points="645,736 630,732.1 630,739.9" fill="#1c1b19"/><polygon points="666,736 681,732.1 681,739.9" fill="#1c1b19"/>
<circle cx="737.2" cy="559.2" r="19.8" fill="url(#ring)"/><circle cx="737.2" cy="559.2" r="19.400000000000002" fill="none" stroke="#8a8a8a" stroke-opacity="0.55" stroke-width="0.8"/><circle cx="737.2" cy="559.2" r="17.8" fill="#a84a00"/><circle cx="737.2" cy="559.2" r="17.2" fill="url(#og)"/><path d="M720.6880000000001,560.2C728.6,563.2 735.48,562.2 741.5,558.2C745.8000000000001,556.2 750.96,557.2 753.884,557.2A17.2,17.2 0 0 0 720.6880000000001,560.2Z" fill="url(#oh)"/><path d="M726.5360000000001,551.976C728.6,548.5360000000001 732.0400000000001,546.816 735.1360000000001,546.4720000000001" fill="none" stroke="#ffe8c0" stroke-opacity="0.8" stroke-width="1.6" stroke-linecap="round"/>
<circle cx="1068.6" cy="727" r="22.0" fill="url(#ring)"/><circle cx="1068.6" cy="727" r="21.6" fill="none" stroke="#8a8a8a" stroke-opacity="0.55" stroke-width="0.8"/><circle cx="1068.6" cy="727" r="20.0" fill="#a84a00"/><circle cx="1068.6" cy="727" r="19.4" fill="url(#og)"/><path d="M1049.9759999999999,728C1058.8999999999999,731 1066.6599999999999,730 1073.4499999999998,726C1078.3,724 1084.12,725 1087.418,725A19.4,19.4 0 0 0 1049.9759999999999,728Z" fill="url(#oh)"/><path d="M1056.572,718.852C1058.8999999999999,714.972 1062.78,713.032 1066.272,712.644" fill="none" stroke="#ffe8c0" stroke-opacity="0.8" stroke-width="1.6" stroke-linecap="round"/>
<circle cx="1190.8" cy="727" r="22.0" fill="url(#ring)"/><circle cx="1190.8" cy="727" r="21.6" fill="none" stroke="#8a8a8a" stroke-opacity="0.55" stroke-width="0.8"/><circle cx="1190.8" cy="727" r="20.0" fill="#a84a00"/><circle cx="1190.8" cy="727" r="19.4" fill="url(#og)"/><path d="M1172.176,728C1181.1,731 1188.86,730 1195.6499999999999,726C1200.5,724 1206.32,725 1209.618,725A19.4,19.4 0 0 0 1172.176,728Z" fill="url(#oh)"/><path d="M1178.772,718.852C1181.1,714.972 1184.98,713.032 1188.472,712.644" fill="none" stroke="#ffe8c0" stroke-opacity="0.8" stroke-width="1.6" stroke-linecap="round"/>
<circle cx="1007.2" cy="558.9" r="18.5" fill="url(#ring2)"/><circle cx="1007.2" cy="558.9" r="18.1" fill="none" stroke="#999" stroke-opacity="0.5" stroke-width="0.8"/><circle cx="1007.2" cy="558.9" r="14.9" fill="url(#gg)" stroke="#1e1e1e" stroke-width="1.7"/><circle cx="1007.2" cy="558.9" r="12.3" fill="none" stroke="#c8c8c8" stroke-opacity="0.55" stroke-width="0.9"/>
<circle cx="900.9" cy="730.8" r="18.5" fill="url(#ring2)"/><circle cx="900.9" cy="730.8" r="18.1" fill="none" stroke="#999" stroke-opacity="0.5" stroke-width="0.8"/><circle cx="900.9" cy="730.8" r="14.9" fill="url(#gg)" stroke="#1e1e1e" stroke-width="1.7"/><circle cx="900.9" cy="730.8" r="12.3" fill="none" stroke="#c8c8c8" stroke-opacity="0.55" stroke-width="0.9"/>
<circle cx="1064.6" cy="608.4" r="19" fill="url(#ring2)"/><circle cx="1064.6" cy="608.4" r="18.6" fill="none" stroke="#999" stroke-opacity="0.5" stroke-width="0.8"/><circle cx="1064.6" cy="608.4" r="15" fill="#a6a6a6" stroke="#333" stroke-width="1.3"/><circle cx="1064.6" cy="608.4" r="12.4" fill="url(#gg2)" stroke="#484848" stroke-width="1"/><path d="M1067.1999999999998,603.1999999999999A5.8,5.8 0 1 1 1062.0,603.1999999999999" fill="none" stroke="#3a3a3a" stroke-width="1.5"/><path d="M1064.6,601.4V605.1999999999999" stroke="#3a3a3a" stroke-width="1.4"/>
</svg>
<div class="abs" style="left:9px;top:901px;width:745px;height:24px;border:1px solid #999;border-bottom:none;background:#fff"></div>
<div class="abs" style="left:757px;top:901px;width:323px;height:24px;border:1px solid #999;border-bottom:none;background:#fff"></div>
<div class="abs" style="left:1083px;top:901px;width:291px;height:24px;border:1px solid #999;border-bottom:none;background:#fff"></div>
<div class="abs" style="left:793.0px;top:903.7px;font-size:14.5px;line-height:17px;color:#1b3f73;white-space:nowrap;transform:scaleX(0.9000);transform-origin:0 50%;">Last build:</div>
<div class="abs" style="left:882.3px;top:903.7px;font-size:14.5px;line-height:17px;color:#1b3f73;white-space:nowrap;transform:scaleX(0.8665);transform-origin:0 50%;">0</div>
<div class="abs" style="left:918.0px;top:903.7px;font-size:14.5px;line-height:17px;color:#1b3f73;white-space:nowrap;transform:scaleX(0.8665);transform-origin:0 50%;">0</div>
<div class="abs" style="left:953.0px;top:903.7px;font-size:14.5px;line-height:17px;color:#1b3f73;white-space:nowrap;transform:scaleX(0.8751);transform-origin:0 50%;">Precompile:</div>
<svg class="abs" style="left:860px;top:904px" width="190" height="18"><circle cx="8.5" cy="8.5" r="6.5" fill="#e01010"/><circle cx="8.5" cy="8.5" r="6.5" fill="none" stroke="#800" stroke-width="0.8"/><path d="M5.5,5.5L11.5,11.5M11.5,5.5L5.5,11.5" stroke="#fff" stroke-width="2.2"/><circle cx="44" cy="8.5" r="6.5" fill="#f8f020" stroke="#776" stroke-width="0.8"/><circle cx="44" cy="6.5" r="2.2" fill="#222"/><path d="M44,8V13" stroke="#222" stroke-width="1.6"/><path d="M168,9L173,14L184,2" fill="none" stroke="#18901c" stroke-width="2.6"/></svg>
<div class="abs" style="left:1159.0px;top:904.5px;font-size:14.5px;line-height:17px;color:#111;white-space:nowrap;transform:scaleX(0.9440);transform-origin:0 50%;">Current user: (nobody)</div>
<svg class="abs" style="left:1378px;top:908px" width="16" height="16"><path d="M15,2L2,15M15,6L6,15M15,10L10,15" stroke="#999" stroke-width="1.3"/></svg>
</div>
</body></html>
